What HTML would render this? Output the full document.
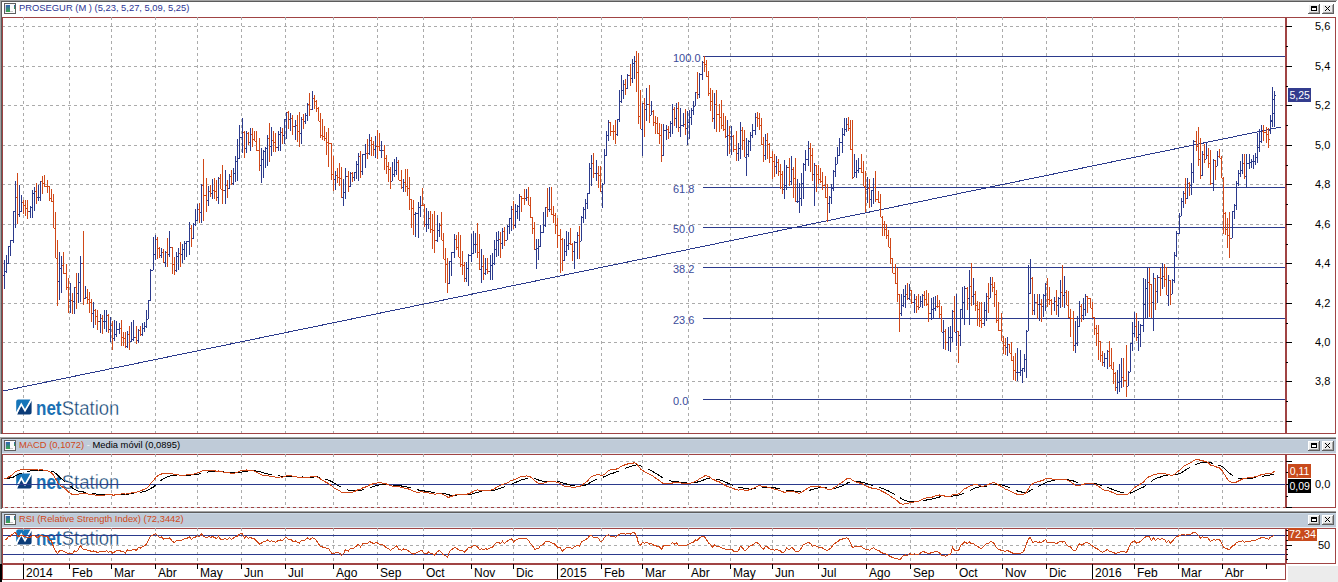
<!DOCTYPE html>
<html><head><meta charset="utf-8"><style>
html,body{margin:0;padding:0;background:#fff;}
body{width:1338px;height:582px;position:relative;overflow:hidden;font-family:"Liberation Sans",sans-serif;}
svg{position:absolute;left:0;top:0;}
.t{position:absolute;white-space:nowrap;line-height:1.2;}
.lg{position:absolute;white-space:nowrap;font-size:19px;line-height:1;color:#0d3f72;letter-spacing:-0.3px}
.lg b{color:#1a70b4;}
</style></head><body>
<svg shape-rendering="crispEdges" width="1338" height="582" viewBox="0 0 1338 582">
<rect x="0" y="0" width="1338" height="582" fill="#ffffff" /><rect x="1288" y="566" width="50" height="16" fill="#ececec" /><rect x="0" y="0" width="1" height="434" fill="#a4a4a4" /><rect x="1" y="1" width="1" height="433" fill="#5c5c5c" /><rect x="0" y="437" width="1" height="72" fill="#a4a4a4" /><rect x="1" y="438" width="1" height="71" fill="#5c5c5c" /><rect x="0" y="511" width="1" height="53" fill="#a4a4a4" /><rect x="1" y="512" width="1" height="52" fill="#5c5c5c" /><rect x="0" y="564" width="2" height="18" fill="#000000" /><rect x="0" y="0" width="1337" height="1" fill="#a4a4a4" /><rect x="1" y="1" width="1335" height="1" fill="#5c5c5c" /><rect x="0" y="437" width="1336" height="1" fill="#a4a4a4" /><rect x="1" y="438" width="1335" height="1" fill="#5c5c5c" /><rect x="2" y="439" width="1334" height="14" fill="#bfcbd8" /><rect x="2" y="439" width="1334" height="1" fill="#c9d7e5" /><rect x="2" y="453" width="1334" height="1" fill="#eaf0f5" /><rect x="0" y="511" width="1336" height="1" fill="#a4a4a4" /><rect x="1" y="512" width="1335" height="1" fill="#5c5c5c" /><rect x="2" y="513" width="1334" height="14" fill="#bfcbd8" /><rect x="2" y="513" width="1334" height="1" fill="#c9d7e5" /><rect x="2" y="527" width="1334" height="1" fill="#eaf0f5" /><line x1="23.5" y1="17" x2="23.5" y2="433" stroke="#ababab" stroke-width="1" stroke-dasharray="3 3"/><line x1="69.5" y1="17" x2="69.5" y2="433" stroke="#ababab" stroke-width="1" stroke-dasharray="3 3"/><line x1="111.5" y1="17" x2="111.5" y2="433" stroke="#ababab" stroke-width="1" stroke-dasharray="3 3"/><line x1="155.5" y1="17" x2="155.5" y2="433" stroke="#ababab" stroke-width="1" stroke-dasharray="3 3"/><line x1="197.5" y1="17" x2="197.5" y2="433" stroke="#ababab" stroke-width="1" stroke-dasharray="3 3"/><line x1="241.5" y1="17" x2="241.5" y2="433" stroke="#ababab" stroke-width="1" stroke-dasharray="3 3"/><line x1="285.5" y1="17" x2="285.5" y2="433" stroke="#ababab" stroke-width="1" stroke-dasharray="3 3"/><line x1="333.5" y1="17" x2="333.5" y2="433" stroke="#ababab" stroke-width="1" stroke-dasharray="3 3"/><line x1="377.5" y1="17" x2="377.5" y2="433" stroke="#ababab" stroke-width="1" stroke-dasharray="3 3"/><line x1="423.5" y1="17" x2="423.5" y2="433" stroke="#ababab" stroke-width="1" stroke-dasharray="3 3"/><line x1="471.5" y1="17" x2="471.5" y2="433" stroke="#ababab" stroke-width="1" stroke-dasharray="3 3"/><line x1="513.5" y1="17" x2="513.5" y2="433" stroke="#ababab" stroke-width="1" stroke-dasharray="3 3"/><line x1="557.5" y1="17" x2="557.5" y2="433" stroke="#ababab" stroke-width="1" stroke-dasharray="3 3"/><line x1="601.5" y1="17" x2="601.5" y2="433" stroke="#ababab" stroke-width="1" stroke-dasharray="3 3"/><line x1="642.5" y1="17" x2="642.5" y2="433" stroke="#ababab" stroke-width="1" stroke-dasharray="3 3"/><line x1="688.5" y1="17" x2="688.5" y2="433" stroke="#ababab" stroke-width="1" stroke-dasharray="3 3"/><line x1="730.5" y1="17" x2="730.5" y2="433" stroke="#ababab" stroke-width="1" stroke-dasharray="3 3"/><line x1="772.5" y1="17" x2="772.5" y2="433" stroke="#ababab" stroke-width="1" stroke-dasharray="3 3"/><line x1="818.5" y1="17" x2="818.5" y2="433" stroke="#ababab" stroke-width="1" stroke-dasharray="3 3"/><line x1="866.5" y1="17" x2="866.5" y2="433" stroke="#ababab" stroke-width="1" stroke-dasharray="3 3"/><line x1="910.5" y1="17" x2="910.5" y2="433" stroke="#ababab" stroke-width="1" stroke-dasharray="3 3"/><line x1="956.5" y1="17" x2="956.5" y2="433" stroke="#ababab" stroke-width="1" stroke-dasharray="3 3"/><line x1="1002.5" y1="17" x2="1002.5" y2="433" stroke="#ababab" stroke-width="1" stroke-dasharray="3 3"/><line x1="1046.5" y1="17" x2="1046.5" y2="433" stroke="#ababab" stroke-width="1" stroke-dasharray="3 3"/><line x1="1092.5" y1="17" x2="1092.5" y2="433" stroke="#ababab" stroke-width="1" stroke-dasharray="3 3"/><line x1="1134.5" y1="17" x2="1134.5" y2="433" stroke="#ababab" stroke-width="1" stroke-dasharray="3 3"/><line x1="1178.5" y1="17" x2="1178.5" y2="433" stroke="#ababab" stroke-width="1" stroke-dasharray="3 3"/><line x1="1222.5" y1="17" x2="1222.5" y2="433" stroke="#ababab" stroke-width="1" stroke-dasharray="3 3"/><line x1="2" y1="26.5" x2="1285" y2="26.5" stroke="#ababab" stroke-width="1" stroke-dasharray="3 3"/><line x1="2" y1="66.5" x2="1285" y2="66.5" stroke="#ababab" stroke-width="1" stroke-dasharray="3 3"/><line x1="2" y1="105.5" x2="1285" y2="105.5" stroke="#ababab" stroke-width="1" stroke-dasharray="3 3"/><line x1="2" y1="145.5" x2="1285" y2="145.5" stroke="#ababab" stroke-width="1" stroke-dasharray="3 3"/><line x1="2" y1="184.5" x2="1285" y2="184.5" stroke="#ababab" stroke-width="1" stroke-dasharray="3 3"/><line x1="2" y1="224.5" x2="1285" y2="224.5" stroke="#ababab" stroke-width="1" stroke-dasharray="3 3"/><line x1="2" y1="263.5" x2="1285" y2="263.5" stroke="#ababab" stroke-width="1" stroke-dasharray="3 3"/><line x1="2" y1="303.5" x2="1285" y2="303.5" stroke="#ababab" stroke-width="1" stroke-dasharray="3 3"/><line x1="2" y1="342.5" x2="1285" y2="342.5" stroke="#ababab" stroke-width="1" stroke-dasharray="3 3"/><line x1="2" y1="381.5" x2="1285" y2="381.5" stroke="#ababab" stroke-width="1" stroke-dasharray="3 3"/><line x1="2" y1="421.5" x2="1285" y2="421.5" stroke="#ababab" stroke-width="1" stroke-dasharray="3 3"/><line x1="23.5" y1="454" x2="23.5" y2="507" stroke="#ababab" stroke-width="1" stroke-dasharray="3 3"/><line x1="69.5" y1="454" x2="69.5" y2="507" stroke="#ababab" stroke-width="1" stroke-dasharray="3 3"/><line x1="111.5" y1="454" x2="111.5" y2="507" stroke="#ababab" stroke-width="1" stroke-dasharray="3 3"/><line x1="155.5" y1="454" x2="155.5" y2="507" stroke="#ababab" stroke-width="1" stroke-dasharray="3 3"/><line x1="197.5" y1="454" x2="197.5" y2="507" stroke="#ababab" stroke-width="1" stroke-dasharray="3 3"/><line x1="241.5" y1="454" x2="241.5" y2="507" stroke="#ababab" stroke-width="1" stroke-dasharray="3 3"/><line x1="285.5" y1="454" x2="285.5" y2="507" stroke="#ababab" stroke-width="1" stroke-dasharray="3 3"/><line x1="333.5" y1="454" x2="333.5" y2="507" stroke="#ababab" stroke-width="1" stroke-dasharray="3 3"/><line x1="377.5" y1="454" x2="377.5" y2="507" stroke="#ababab" stroke-width="1" stroke-dasharray="3 3"/><line x1="423.5" y1="454" x2="423.5" y2="507" stroke="#ababab" stroke-width="1" stroke-dasharray="3 3"/><line x1="471.5" y1="454" x2="471.5" y2="507" stroke="#ababab" stroke-width="1" stroke-dasharray="3 3"/><line x1="513.5" y1="454" x2="513.5" y2="507" stroke="#ababab" stroke-width="1" stroke-dasharray="3 3"/><line x1="557.5" y1="454" x2="557.5" y2="507" stroke="#ababab" stroke-width="1" stroke-dasharray="3 3"/><line x1="601.5" y1="454" x2="601.5" y2="507" stroke="#ababab" stroke-width="1" stroke-dasharray="3 3"/><line x1="642.5" y1="454" x2="642.5" y2="507" stroke="#ababab" stroke-width="1" stroke-dasharray="3 3"/><line x1="688.5" y1="454" x2="688.5" y2="507" stroke="#ababab" stroke-width="1" stroke-dasharray="3 3"/><line x1="730.5" y1="454" x2="730.5" y2="507" stroke="#ababab" stroke-width="1" stroke-dasharray="3 3"/><line x1="772.5" y1="454" x2="772.5" y2="507" stroke="#ababab" stroke-width="1" stroke-dasharray="3 3"/><line x1="818.5" y1="454" x2="818.5" y2="507" stroke="#ababab" stroke-width="1" stroke-dasharray="3 3"/><line x1="866.5" y1="454" x2="866.5" y2="507" stroke="#ababab" stroke-width="1" stroke-dasharray="3 3"/><line x1="910.5" y1="454" x2="910.5" y2="507" stroke="#ababab" stroke-width="1" stroke-dasharray="3 3"/><line x1="956.5" y1="454" x2="956.5" y2="507" stroke="#ababab" stroke-width="1" stroke-dasharray="3 3"/><line x1="1002.5" y1="454" x2="1002.5" y2="507" stroke="#ababab" stroke-width="1" stroke-dasharray="3 3"/><line x1="1046.5" y1="454" x2="1046.5" y2="507" stroke="#ababab" stroke-width="1" stroke-dasharray="3 3"/><line x1="1092.5" y1="454" x2="1092.5" y2="507" stroke="#ababab" stroke-width="1" stroke-dasharray="3 3"/><line x1="1134.5" y1="454" x2="1134.5" y2="507" stroke="#ababab" stroke-width="1" stroke-dasharray="3 3"/><line x1="1178.5" y1="454" x2="1178.5" y2="507" stroke="#ababab" stroke-width="1" stroke-dasharray="3 3"/><line x1="1222.5" y1="454" x2="1222.5" y2="507" stroke="#ababab" stroke-width="1" stroke-dasharray="3 3"/><line x1="2" y1="461.5" x2="1285" y2="461.5" stroke="#ababab" stroke-width="1" stroke-dasharray="3 3"/><line x1="23.5" y1="528" x2="23.5" y2="563" stroke="#ababab" stroke-width="1" stroke-dasharray="3 3"/><line x1="69.5" y1="528" x2="69.5" y2="563" stroke="#ababab" stroke-width="1" stroke-dasharray="3 3"/><line x1="111.5" y1="528" x2="111.5" y2="563" stroke="#ababab" stroke-width="1" stroke-dasharray="3 3"/><line x1="155.5" y1="528" x2="155.5" y2="563" stroke="#ababab" stroke-width="1" stroke-dasharray="3 3"/><line x1="197.5" y1="528" x2="197.5" y2="563" stroke="#ababab" stroke-width="1" stroke-dasharray="3 3"/><line x1="241.5" y1="528" x2="241.5" y2="563" stroke="#ababab" stroke-width="1" stroke-dasharray="3 3"/><line x1="285.5" y1="528" x2="285.5" y2="563" stroke="#ababab" stroke-width="1" stroke-dasharray="3 3"/><line x1="333.5" y1="528" x2="333.5" y2="563" stroke="#ababab" stroke-width="1" stroke-dasharray="3 3"/><line x1="377.5" y1="528" x2="377.5" y2="563" stroke="#ababab" stroke-width="1" stroke-dasharray="3 3"/><line x1="423.5" y1="528" x2="423.5" y2="563" stroke="#ababab" stroke-width="1" stroke-dasharray="3 3"/><line x1="471.5" y1="528" x2="471.5" y2="563" stroke="#ababab" stroke-width="1" stroke-dasharray="3 3"/><line x1="513.5" y1="528" x2="513.5" y2="563" stroke="#ababab" stroke-width="1" stroke-dasharray="3 3"/><line x1="557.5" y1="528" x2="557.5" y2="563" stroke="#ababab" stroke-width="1" stroke-dasharray="3 3"/><line x1="601.5" y1="528" x2="601.5" y2="563" stroke="#ababab" stroke-width="1" stroke-dasharray="3 3"/><line x1="642.5" y1="528" x2="642.5" y2="563" stroke="#ababab" stroke-width="1" stroke-dasharray="3 3"/><line x1="688.5" y1="528" x2="688.5" y2="563" stroke="#ababab" stroke-width="1" stroke-dasharray="3 3"/><line x1="730.5" y1="528" x2="730.5" y2="563" stroke="#ababab" stroke-width="1" stroke-dasharray="3 3"/><line x1="772.5" y1="528" x2="772.5" y2="563" stroke="#ababab" stroke-width="1" stroke-dasharray="3 3"/><line x1="818.5" y1="528" x2="818.5" y2="563" stroke="#ababab" stroke-width="1" stroke-dasharray="3 3"/><line x1="866.5" y1="528" x2="866.5" y2="563" stroke="#ababab" stroke-width="1" stroke-dasharray="3 3"/><line x1="910.5" y1="528" x2="910.5" y2="563" stroke="#ababab" stroke-width="1" stroke-dasharray="3 3"/><line x1="956.5" y1="528" x2="956.5" y2="563" stroke="#ababab" stroke-width="1" stroke-dasharray="3 3"/><line x1="1002.5" y1="528" x2="1002.5" y2="563" stroke="#ababab" stroke-width="1" stroke-dasharray="3 3"/><line x1="1046.5" y1="528" x2="1046.5" y2="563" stroke="#ababab" stroke-width="1" stroke-dasharray="3 3"/><line x1="1092.5" y1="528" x2="1092.5" y2="563" stroke="#ababab" stroke-width="1" stroke-dasharray="3 3"/><line x1="1134.5" y1="528" x2="1134.5" y2="563" stroke="#ababab" stroke-width="1" stroke-dasharray="3 3"/><line x1="1178.5" y1="528" x2="1178.5" y2="563" stroke="#ababab" stroke-width="1" stroke-dasharray="3 3"/><line x1="1222.5" y1="528" x2="1222.5" y2="563" stroke="#ababab" stroke-width="1" stroke-dasharray="3 3"/><line x1="2" y1="545.5" x2="1285" y2="545.5" stroke="#ababab" stroke-width="1" stroke-dasharray="3 3"/><g opacity="1.0" shape-rendering="geometricPrecision"><path d="M16.20,401.60 Q16.20,399.60 18.20,399.60 H30.60 L25.00,410.40 L21.30,404.10 L16.20,412.80 Z" fill="#1675b9"/><path d="M31.60,400.60 V412.50 Q31.60,414.50 29.60,414.50 H17.20 L21.30,404.10 L25.00,410.40 Z" fill="#0b3c78"/><path d="M15.50,415.00 L21.30,404.30 L25.00,410.60 L31.80,399.00" fill="none" stroke="#ffffff" stroke-width="1.7" stroke-linejoin="miter"/><text x="36" y="414.6" font-family="Liberation Sans" font-size="19.5" font-weight="bold" textLength="25.5" lengthAdjust="spacingAndGlyphs" fill="#1a70b4">net</text><text x="61.8" y="414.6" font-family="Liberation Sans" font-size="19.5" textLength="57.5" lengthAdjust="spacingAndGlyphs" fill="#0d3f72" stroke="#ffffff" stroke-width="0.35">Station</text></g><g opacity="1.0" shape-rendering="geometricPrecision"><path d="M16.20,475.60 Q16.20,473.60 18.20,473.60 H30.60 L25.00,484.40 L21.30,478.10 L16.20,486.80 Z" fill="#1675b9"/><path d="M31.60,474.60 V486.50 Q31.60,488.50 29.60,488.50 H17.20 L21.30,478.10 L25.00,484.40 Z" fill="#0b3c78"/><path d="M15.50,489.00 L21.30,478.30 L25.00,484.60 L31.80,473.00" fill="none" stroke="#ffffff" stroke-width="1.7" stroke-linejoin="miter"/><text x="36" y="488.6" font-family="Liberation Sans" font-size="19.5" font-weight="bold" textLength="25.5" lengthAdjust="spacingAndGlyphs" fill="#1a70b4">net</text><text x="61.8" y="488.6" font-family="Liberation Sans" font-size="19.5" textLength="57.5" lengthAdjust="spacingAndGlyphs" fill="#0d3f72" stroke="#ffffff" stroke-width="0.35">Station</text></g><g opacity="1.0" shape-rendering="geometricPrecision"><path d="M16.20,531.60 Q16.20,529.60 18.20,529.60 H30.60 L25.00,540.40 L21.30,534.10 L16.20,542.80 Z" fill="#1675b9"/><path d="M31.60,530.60 V542.50 Q31.60,544.50 29.60,544.50 H17.20 L21.30,534.10 L25.00,540.40 Z" fill="#0b3c78"/><path d="M15.50,545.00 L21.30,534.30 L25.00,540.60 L31.80,529.00" fill="none" stroke="#ffffff" stroke-width="1.7" stroke-linejoin="miter"/><text x="36" y="544.6" font-family="Liberation Sans" font-size="19.5" font-weight="bold" textLength="25.5" lengthAdjust="spacingAndGlyphs" fill="#1a70b4">net</text><text x="61.8" y="544.6" font-family="Liberation Sans" font-size="19.5" textLength="57.5" lengthAdjust="spacingAndGlyphs" fill="#0d3f72" stroke="#ffffff" stroke-width="0.35">Station</text></g><line x1="3" y1="391" x2="1281" y2="127" stroke="#2b3a8c" stroke-width="1"/><line x1="703" y1="56.5" x2="1285" y2="56.5" stroke="#2b3a8c" stroke-width="1"/><line x1="703" y1="187.5" x2="1285" y2="187.5" stroke="#2b3a8c" stroke-width="1"/><line x1="703" y1="227.5" x2="1285" y2="227.5" stroke="#2b3a8c" stroke-width="1"/><line x1="703" y1="267.5" x2="1285" y2="267.5" stroke="#2b3a8c" stroke-width="1"/><line x1="703" y1="318.5" x2="1285" y2="318.5" stroke="#2b3a8c" stroke-width="1"/><line x1="703" y1="399.5" x2="1285" y2="399.5" stroke="#2b3a8c" stroke-width="1"/><path d="M4.5,260V289M3,275.5h1M5,271.5h1" stroke="#2b3a8c" stroke-width="1" fill="none"/><path d="M6.5,255V273M5,271.5h1M7,263.5h1" stroke="#2b3a8c" stroke-width="1" fill="none"/><path d="M8.5,246V264M7,263.5h1M9,246.5h1" stroke="#2b3a8c" stroke-width="1" fill="none"/><path d="M10.5,240V256M9,246.5h1M11,240.5h1" stroke="#2b3a8c" stroke-width="1" fill="none"/><path d="M13.5,211V243M12,240.5h1M14,211.5h1" stroke="#2b3a8c" stroke-width="1" fill="none"/><path d="M15.5,181V228M14,211.5h1M16,197.5h1" stroke="#2b3a8c" stroke-width="1" fill="none"/><path d="M17.5,173V224M16,197.5h1M18,214.5h1" stroke="#d04818" stroke-width="1" fill="none"/><path d="M19.5,185V217M18,214.5h1M20,211.5h1" stroke="#2b3a8c" stroke-width="1" fill="none"/><path d="M21.5,195V212M20,211.5h1M22,202.5h1" stroke="#2b3a8c" stroke-width="1" fill="none"/><path d="M23.5,200V214M22,202.5h1M24,205.5h1" stroke="#d04818" stroke-width="1" fill="none"/><path d="M25.5,200V216M24,205.5h1M26,208.5h1" stroke="#d04818" stroke-width="1" fill="none"/><path d="M27.5,200V219M26,208.5h1M28,211.5h1" stroke="#d04818" stroke-width="1" fill="none"/><path d="M30.5,206V218M29,211.5h1M31,207.5h1" stroke="#2b3a8c" stroke-width="1" fill="none"/><path d="M32.5,190V218M31,207.5h1M33,193.5h1" stroke="#2b3a8c" stroke-width="1" fill="none"/><path d="M34.5,187V211M33,193.5h1M35,191.5h1" stroke="#2b3a8c" stroke-width="1" fill="none"/><path d="M36.5,183V204M35,191.5h1M37,197.5h1" stroke="#d04818" stroke-width="1" fill="none"/><path d="M38.5,185V201M37,197.5h1M39,197.5h1" stroke="#2b3a8c" stroke-width="1" fill="none"/><path d="M40.5,181V201M39,197.5h1M41,181.5h1" stroke="#2b3a8c" stroke-width="1" fill="none"/><path d="M42.5,176V194M41,181.5h1M43,183.5h1" stroke="#d04818" stroke-width="1" fill="none"/><path d="M44.5,175V187M43,183.5h1M45,186.5h1" stroke="#d04818" stroke-width="1" fill="none"/><path d="M47.5,180V193M46,186.5h1M48,186.5h1" stroke="#d04818" stroke-width="1" fill="none"/><path d="M49.5,186V201M48,186.5h1M50,198.5h1" stroke="#d04818" stroke-width="1" fill="none"/><path d="M51.5,189V202M50,198.5h1M52,201.5h1" stroke="#d04818" stroke-width="1" fill="none"/><path d="M53.5,194V228M52,201.5h1M54,228.5h1" stroke="#d04818" stroke-width="1" fill="none"/><path d="M55.5,212V258M54,228.5h1M56,258.5h1" stroke="#d04818" stroke-width="1" fill="none"/><path d="M57.5,240V306M56,258.5h1M58,281.5h1" stroke="#d04818" stroke-width="1" fill="none"/><path d="M59.5,252V300M58,281.5h1M60,268.5h1" stroke="#2b3a8c" stroke-width="1" fill="none"/><path d="M61.5,256V293M60,268.5h1M62,265.5h1" stroke="#2b3a8c" stroke-width="1" fill="none"/><path d="M63.5,252V274M62,265.5h1M64,273.5h1" stroke="#d04818" stroke-width="1" fill="none"/><path d="M66.5,264V290M65,273.5h1M67,287.5h1" stroke="#d04818" stroke-width="1" fill="none"/><path d="M68.5,278V313M67,287.5h1M69,301.5h1" stroke="#d04818" stroke-width="1" fill="none"/><path d="M70.5,283V313M69,301.5h1M71,300.5h1" stroke="#2b3a8c" stroke-width="1" fill="none"/><path d="M72.5,293V314M71,300.5h1M73,301.5h1" stroke="#d04818" stroke-width="1" fill="none"/><path d="M74.5,287V314M73,301.5h1M75,287.5h1" stroke="#2b3a8c" stroke-width="1" fill="none"/><path d="M76.5,273V309M75,287.5h1M77,293.5h1" stroke="#d04818" stroke-width="1" fill="none"/><path d="M78.5,273V303M77,293.5h1M79,282.5h1" stroke="#2b3a8c" stroke-width="1" fill="none"/><path d="M80.5,256V302M79,282.5h1M81,263.5h1" stroke="#2b3a8c" stroke-width="1" fill="none"/><path d="M83.5,231V305M82,263.5h1M84,298.5h1" stroke="#d04818" stroke-width="1" fill="none"/><path d="M85.5,286V299M84,298.5h1M86,297.5h1" stroke="#2b3a8c" stroke-width="1" fill="none"/><path d="M87.5,289V304M86,297.5h1M88,299.5h1" stroke="#d04818" stroke-width="1" fill="none"/><path d="M89.5,292V313M88,299.5h1M90,302.5h1" stroke="#d04818" stroke-width="1" fill="none"/><path d="M91.5,299V322M90,302.5h1M92,313.5h1" stroke="#d04818" stroke-width="1" fill="none"/><path d="M93.5,302V328M92,313.5h1M94,310.5h1" stroke="#2b3a8c" stroke-width="1" fill="none"/><path d="M95.5,309V325M94,310.5h1M96,316.5h1" stroke="#d04818" stroke-width="1" fill="none"/><path d="M97.5,310V330M96,316.5h1M98,321.5h1" stroke="#d04818" stroke-width="1" fill="none"/><path d="M100.5,314V333M99,321.5h1M101,318.5h1" stroke="#2b3a8c" stroke-width="1" fill="none"/><path d="M102.5,315V334M101,318.5h1M103,321.5h1" stroke="#d04818" stroke-width="1" fill="none"/><path d="M104.5,310V329M103,321.5h1M105,321.5h1" stroke="#2b3a8c" stroke-width="1" fill="none"/><path d="M106.5,310V332M105,321.5h1M107,315.5h1" stroke="#2b3a8c" stroke-width="1" fill="none"/><path d="M108.5,314V333M107,315.5h1M109,329.5h1" stroke="#d04818" stroke-width="1" fill="none"/><path d="M110.5,317V342M109,329.5h1M111,325.5h1" stroke="#2b3a8c" stroke-width="1" fill="none"/><path d="M112.5,321V350M111,325.5h1M113,338.5h1" stroke="#d04818" stroke-width="1" fill="none"/><path d="M114.5,320V341M113,338.5h1M115,334.5h1" stroke="#2b3a8c" stroke-width="1" fill="none"/><path d="M116.5,321V337M115,334.5h1M117,329.5h1" stroke="#2b3a8c" stroke-width="1" fill="none"/><path d="M119.5,323V334M118,329.5h1M120,328.5h1" stroke="#2b3a8c" stroke-width="1" fill="none"/><path d="M121.5,320V346M120,328.5h1M122,337.5h1" stroke="#d04818" stroke-width="1" fill="none"/><path d="M123.5,332V346M122,337.5h1M124,338.5h1" stroke="#d04818" stroke-width="1" fill="none"/><path d="M125.5,332V348M124,338.5h1M126,346.5h1" stroke="#d04818" stroke-width="1" fill="none"/><path d="M127.5,331V348M126,346.5h1M128,334.5h1" stroke="#2b3a8c" stroke-width="1" fill="none"/><path d="M129.5,326V350M128,334.5h1M130,341.5h1" stroke="#d04818" stroke-width="1" fill="none"/><path d="M131.5,322V342M130,341.5h1M132,339.5h1" stroke="#2b3a8c" stroke-width="1" fill="none"/><path d="M133.5,320V341M132,339.5h1M134,337.5h1" stroke="#2b3a8c" stroke-width="1" fill="none"/><path d="M136.5,326V344M135,337.5h1M137,340.5h1" stroke="#d04818" stroke-width="1" fill="none"/><path d="M138.5,329V343M137,340.5h1M139,330.5h1" stroke="#2b3a8c" stroke-width="1" fill="none"/><path d="M140.5,326V336M139,330.5h1M141,334.5h1" stroke="#d04818" stroke-width="1" fill="none"/><path d="M142.5,323V336M141,334.5h1M143,328.5h1" stroke="#2b3a8c" stroke-width="1" fill="none"/><path d="M144.5,322V332M143,328.5h1M145,326.5h1" stroke="#2b3a8c" stroke-width="1" fill="none"/><path d="M146.5,310V328M145,326.5h1M147,319.5h1" stroke="#2b3a8c" stroke-width="1" fill="none"/><path d="M148.5,300V319M147,319.5h1M149,300.5h1" stroke="#2b3a8c" stroke-width="1" fill="none"/><path d="M150.5,269V301M149,300.5h1M151,270.5h1" stroke="#2b3a8c" stroke-width="1" fill="none"/><path d="M153.5,237V270M152,270.5h1M154,254.5h1" stroke="#2b3a8c" stroke-width="1" fill="none"/><path d="M155.5,235V260M154,254.5h1M156,239.5h1" stroke="#2b3a8c" stroke-width="1" fill="none"/><path d="M157.5,237V259M156,239.5h1M158,248.5h1" stroke="#d04818" stroke-width="1" fill="none"/><path d="M159.5,247V258M158,248.5h1M160,255.5h1" stroke="#d04818" stroke-width="1" fill="none"/><path d="M161.5,248V258M160,255.5h1M162,252.5h1" stroke="#2b3a8c" stroke-width="1" fill="none"/><path d="M163.5,249V263M162,252.5h1M164,262.5h1" stroke="#d04818" stroke-width="1" fill="none"/><path d="M165.5,251V267M164,262.5h1M166,252.5h1" stroke="#2b3a8c" stroke-width="1" fill="none"/><path d="M167.5,238V267M166,252.5h1M168,254.5h1" stroke="#d04818" stroke-width="1" fill="none"/><path d="M169.5,231V257M168,254.5h1M170,247.5h1" stroke="#2b3a8c" stroke-width="1" fill="none"/><path d="M172.5,247V274M171,247.5h1M173,264.5h1" stroke="#d04818" stroke-width="1" fill="none"/><path d="M174.5,257V275M173,264.5h1M175,270.5h1" stroke="#d04818" stroke-width="1" fill="none"/><path d="M176.5,252V272M175,270.5h1M177,256.5h1" stroke="#2b3a8c" stroke-width="1" fill="none"/><path d="M178.5,248V270M177,256.5h1M179,253.5h1" stroke="#2b3a8c" stroke-width="1" fill="none"/><path d="M180.5,242V267M179,253.5h1M181,254.5h1" stroke="#d04818" stroke-width="1" fill="none"/><path d="M182.5,244V263M181,254.5h1M183,249.5h1" stroke="#2b3a8c" stroke-width="1" fill="none"/><path d="M184.5,241V260M183,249.5h1M185,243.5h1" stroke="#2b3a8c" stroke-width="1" fill="none"/><path d="M186.5,241V257M185,243.5h1M187,241.5h1" stroke="#2b3a8c" stroke-width="1" fill="none"/><path d="M189.5,222V255M188,241.5h1M190,228.5h1" stroke="#2b3a8c" stroke-width="1" fill="none"/><path d="M191.5,225V247M190,228.5h1M192,238.5h1" stroke="#d04818" stroke-width="1" fill="none"/><path d="M193.5,223V239M192,238.5h1M194,224.5h1" stroke="#2b3a8c" stroke-width="1" fill="none"/><path d="M195.5,209V226M194,224.5h1M196,220.5h1" stroke="#2b3a8c" stroke-width="1" fill="none"/><path d="M197.5,204V221M196,220.5h1M198,209.5h1" stroke="#2b3a8c" stroke-width="1" fill="none"/><path d="M199.5,203V223M198,209.5h1M200,212.5h1" stroke="#d04818" stroke-width="1" fill="none"/><path d="M201.5,184V223M200,212.5h1M202,185.5h1" stroke="#2b3a8c" stroke-width="1" fill="none"/><path d="M203.5,159V221M202,185.5h1M204,195.5h1" stroke="#d04818" stroke-width="1" fill="none"/><path d="M206.5,178V212M205,195.5h1M207,200.5h1" stroke="#d04818" stroke-width="1" fill="none"/><path d="M208.5,186V206M207,200.5h1M209,191.5h1" stroke="#2b3a8c" stroke-width="1" fill="none"/><path d="M210.5,185V197M209,191.5h1M211,193.5h1" stroke="#d04818" stroke-width="1" fill="none"/><path d="M212.5,179V199M211,193.5h1M213,190.5h1" stroke="#2b3a8c" stroke-width="1" fill="none"/><path d="M214.5,178V199M213,190.5h1M215,191.5h1" stroke="#d04818" stroke-width="1" fill="none"/><path d="M216.5,180V201M215,191.5h1M217,197.5h1" stroke="#d04818" stroke-width="1" fill="none"/><path d="M218.5,177V204M217,197.5h1M219,178.5h1" stroke="#2b3a8c" stroke-width="1" fill="none"/><path d="M220.5,174V189M219,178.5h1M221,189.5h1" stroke="#d04818" stroke-width="1" fill="none"/><path d="M222.5,165V204M221,189.5h1M223,190.5h1" stroke="#d04818" stroke-width="1" fill="none"/><path d="M225.5,170V204M224,190.5h1M226,185.5h1" stroke="#2b3a8c" stroke-width="1" fill="none"/><path d="M227.5,180V198M226,185.5h1M228,188.5h1" stroke="#d04818" stroke-width="1" fill="none"/><path d="M229.5,174V189M228,188.5h1M230,176.5h1" stroke="#2b3a8c" stroke-width="1" fill="none"/><path d="M231.5,170V185M230,176.5h1M232,183.5h1" stroke="#d04818" stroke-width="1" fill="none"/><path d="M233.5,168V185M232,183.5h1M234,173.5h1" stroke="#2b3a8c" stroke-width="1" fill="none"/><path d="M235.5,156V182M234,173.5h1M236,161.5h1" stroke="#2b3a8c" stroke-width="1" fill="none"/><path d="M237.5,139V181M236,161.5h1M238,158.5h1" stroke="#2b3a8c" stroke-width="1" fill="none"/><path d="M239.5,125V159M238,158.5h1M240,137.5h1" stroke="#2b3a8c" stroke-width="1" fill="none"/><path d="M242.5,118V153M241,137.5h1M243,132.5h1" stroke="#2b3a8c" stroke-width="1" fill="none"/><path d="M244.5,131V158M243,132.5h1M245,148.5h1" stroke="#d04818" stroke-width="1" fill="none"/><path d="M246.5,131V153M245,148.5h1M247,133.5h1" stroke="#2b3a8c" stroke-width="1" fill="none"/><path d="M248.5,132V145M247,133.5h1M249,142.5h1" stroke="#d04818" stroke-width="1" fill="none"/><path d="M250.5,128V151M249,142.5h1M251,134.5h1" stroke="#2b3a8c" stroke-width="1" fill="none"/><path d="M252.5,128V147M251,134.5h1M253,139.5h1" stroke="#d04818" stroke-width="1" fill="none"/><path d="M254.5,131V141M253,139.5h1M255,141.5h1" stroke="#d04818" stroke-width="1" fill="none"/><path d="M256.5,131V151M255,141.5h1M257,150.5h1" stroke="#d04818" stroke-width="1" fill="none"/><path d="M259.5,138V171M258,150.5h1M260,165.5h1" stroke="#d04818" stroke-width="1" fill="none"/><path d="M261.5,148V183M260,165.5h1M262,159.5h1" stroke="#2b3a8c" stroke-width="1" fill="none"/><path d="M263.5,150V178M262,159.5h1M264,151.5h1" stroke="#2b3a8c" stroke-width="1" fill="none"/><path d="M265.5,147V168M264,151.5h1M266,148.5h1" stroke="#2b3a8c" stroke-width="1" fill="none"/><path d="M267.5,135V166M266,148.5h1M268,138.5h1" stroke="#2b3a8c" stroke-width="1" fill="none"/><path d="M269.5,123V162M268,138.5h1M270,146.5h1" stroke="#d04818" stroke-width="1" fill="none"/><path d="M271.5,127V156M270,146.5h1M272,140.5h1" stroke="#2b3a8c" stroke-width="1" fill="none"/><path d="M273.5,131V152M272,140.5h1M274,142.5h1" stroke="#d04818" stroke-width="1" fill="none"/><path d="M275.5,133V152M274,142.5h1M276,147.5h1" stroke="#d04818" stroke-width="1" fill="none"/><path d="M278.5,131V151M277,147.5h1M279,134.5h1" stroke="#2b3a8c" stroke-width="1" fill="none"/><path d="M280.5,127V151M279,134.5h1M281,132.5h1" stroke="#2b3a8c" stroke-width="1" fill="none"/><path d="M282.5,128V144M281,132.5h1M283,135.5h1" stroke="#d04818" stroke-width="1" fill="none"/><path d="M284.5,119V144M283,135.5h1M285,119.5h1" stroke="#2b3a8c" stroke-width="1" fill="none"/><path d="M286.5,112V139M285,119.5h1M287,112.5h1" stroke="#2b3a8c" stroke-width="1" fill="none"/><path d="M288.5,111V129M287,112.5h1M289,119.5h1" stroke="#d04818" stroke-width="1" fill="none"/><path d="M290.5,113V131M289,119.5h1M291,118.5h1" stroke="#2b3a8c" stroke-width="1" fill="none"/><path d="M292.5,115V135M291,118.5h1M293,126.5h1" stroke="#d04818" stroke-width="1" fill="none"/><path d="M295.5,120V140M294,126.5h1M296,125.5h1" stroke="#2b3a8c" stroke-width="1" fill="none"/><path d="M297.5,115V142M296,125.5h1M298,131.5h1" stroke="#d04818" stroke-width="1" fill="none"/><path d="M299.5,112V147M298,131.5h1M300,133.5h1" stroke="#d04818" stroke-width="1" fill="none"/><path d="M301.5,117V144M300,133.5h1M302,119.5h1" stroke="#2b3a8c" stroke-width="1" fill="none"/><path d="M303.5,114V129M302,119.5h1M304,121.5h1" stroke="#d04818" stroke-width="1" fill="none"/><path d="M305.5,113V124M304,121.5h1M306,115.5h1" stroke="#2b3a8c" stroke-width="1" fill="none"/><path d="M307.5,103V121M306,115.5h1M308,104.5h1" stroke="#2b3a8c" stroke-width="1" fill="none"/><path d="M309.5,93V116M308,104.5h1M310,109.5h1" stroke="#d04818" stroke-width="1" fill="none"/><path d="M312.5,91V110M311,109.5h1M313,98.5h1" stroke="#2b3a8c" stroke-width="1" fill="none"/><path d="M314.5,95V109M313,98.5h1M315,101.5h1" stroke="#d04818" stroke-width="1" fill="none"/><path d="M316.5,100V112M315,101.5h1M317,108.5h1" stroke="#d04818" stroke-width="1" fill="none"/><path d="M318.5,107V121M317,108.5h1M319,121.5h1" stroke="#d04818" stroke-width="1" fill="none"/><path d="M320.5,113V138M319,121.5h1M321,135.5h1" stroke="#d04818" stroke-width="1" fill="none"/><path d="M322.5,119V140M321,135.5h1M323,136.5h1" stroke="#d04818" stroke-width="1" fill="none"/><path d="M324.5,126V141M323,136.5h1M325,138.5h1" stroke="#d04818" stroke-width="1" fill="none"/><path d="M326.5,132V155M325,138.5h1M327,142.5h1" stroke="#d04818" stroke-width="1" fill="none"/><path d="M328.5,128V167M327,142.5h1M329,143.5h1" stroke="#d04818" stroke-width="1" fill="none"/><path d="M331.5,143V180M330,143.5h1M332,174.5h1" stroke="#d04818" stroke-width="1" fill="none"/><path d="M333.5,156V191M332,174.5h1M334,179.5h1" stroke="#d04818" stroke-width="1" fill="none"/><path d="M335.5,171V190M334,179.5h1M336,175.5h1" stroke="#2b3a8c" stroke-width="1" fill="none"/><path d="M337.5,168V183M336,175.5h1M338,177.5h1" stroke="#d04818" stroke-width="1" fill="none"/><path d="M339.5,163V186M338,177.5h1M340,178.5h1" stroke="#d04818" stroke-width="1" fill="none"/><path d="M341.5,167V198M340,178.5h1M342,197.5h1" stroke="#d04818" stroke-width="1" fill="none"/><path d="M343.5,179V206M342,197.5h1M344,192.5h1" stroke="#2b3a8c" stroke-width="1" fill="none"/><path d="M345.5,168V199M344,192.5h1M346,176.5h1" stroke="#2b3a8c" stroke-width="1" fill="none"/><path d="M348.5,171V192M347,176.5h1M349,186.5h1" stroke="#d04818" stroke-width="1" fill="none"/><path d="M350.5,172V187M349,186.5h1M351,173.5h1" stroke="#2b3a8c" stroke-width="1" fill="none"/><path d="M352.5,172V182M351,173.5h1M353,177.5h1" stroke="#d04818" stroke-width="1" fill="none"/><path d="M354.5,172V181M353,177.5h1M355,172.5h1" stroke="#2b3a8c" stroke-width="1" fill="none"/><path d="M356.5,161V179M355,172.5h1M357,164.5h1" stroke="#2b3a8c" stroke-width="1" fill="none"/><path d="M358.5,153V181M357,164.5h1M359,156.5h1" stroke="#2b3a8c" stroke-width="1" fill="none"/><path d="M360.5,151V178M359,156.5h1M361,171.5h1" stroke="#d04818" stroke-width="1" fill="none"/><path d="M362.5,154V175M361,171.5h1M363,154.5h1" stroke="#2b3a8c" stroke-width="1" fill="none"/><path d="M365.5,144V168M364,154.5h1M366,153.5h1" stroke="#2b3a8c" stroke-width="1" fill="none"/><path d="M367.5,139V159M366,153.5h1M368,153.5h1" stroke="#d04818" stroke-width="1" fill="none"/><path d="M369.5,134V155M368,153.5h1M370,140.5h1" stroke="#2b3a8c" stroke-width="1" fill="none"/><path d="M371.5,137V156M370,140.5h1M372,144.5h1" stroke="#d04818" stroke-width="1" fill="none"/><path d="M373.5,141V156M372,144.5h1M374,149.5h1" stroke="#d04818" stroke-width="1" fill="none"/><path d="M375.5,136V158M374,149.5h1M376,146.5h1" stroke="#2b3a8c" stroke-width="1" fill="none"/><path d="M377.5,130V159M376,146.5h1M378,146.5h1" stroke="#d04818" stroke-width="1" fill="none"/><path d="M379.5,133V151M378,146.5h1M380,150.5h1" stroke="#d04818" stroke-width="1" fill="none"/><path d="M381.5,141V158M380,150.5h1M382,150.5h1" stroke="#2b3a8c" stroke-width="1" fill="none"/><path d="M384.5,145V170M383,150.5h1M385,158.5h1" stroke="#d04818" stroke-width="1" fill="none"/><path d="M386.5,155V174M385,158.5h1M387,166.5h1" stroke="#d04818" stroke-width="1" fill="none"/><path d="M388.5,162V182M387,166.5h1M389,169.5h1" stroke="#d04818" stroke-width="1" fill="none"/><path d="M390.5,167V189M389,169.5h1M391,181.5h1" stroke="#d04818" stroke-width="1" fill="none"/><path d="M392.5,162V181M391,181.5h1M393,174.5h1" stroke="#2b3a8c" stroke-width="1" fill="none"/><path d="M394.5,159V177M393,174.5h1M395,170.5h1" stroke="#2b3a8c" stroke-width="1" fill="none"/><path d="M396.5,157V175M395,170.5h1M397,162.5h1" stroke="#2b3a8c" stroke-width="1" fill="none"/><path d="M398.5,160V180M397,162.5h1M399,180.5h1" stroke="#d04818" stroke-width="1" fill="none"/><path d="M401.5,170V189M400,180.5h1M402,187.5h1" stroke="#d04818" stroke-width="1" fill="none"/><path d="M403.5,179V192M402,187.5h1M404,182.5h1" stroke="#2b3a8c" stroke-width="1" fill="none"/><path d="M405.5,169V192M404,182.5h1M406,186.5h1" stroke="#d04818" stroke-width="1" fill="none"/><path d="M407.5,169V196M406,186.5h1M408,188.5h1" stroke="#d04818" stroke-width="1" fill="none"/><path d="M409.5,177V210M408,188.5h1M410,199.5h1" stroke="#d04818" stroke-width="1" fill="none"/><path d="M411.5,199V228M410,199.5h1M412,208.5h1" stroke="#d04818" stroke-width="1" fill="none"/><path d="M413.5,200V235M412,208.5h1M414,214.5h1" stroke="#d04818" stroke-width="1" fill="none"/><path d="M415.5,212V237M414,214.5h1M416,213.5h1" stroke="#2b3a8c" stroke-width="1" fill="none"/><path d="M418.5,202V238M417,213.5h1M419,207.5h1" stroke="#2b3a8c" stroke-width="1" fill="none"/><path d="M420.5,196V217M419,207.5h1M421,205.5h1" stroke="#2b3a8c" stroke-width="1" fill="none"/><path d="M422.5,188V206M421,205.5h1M423,205.5h1" stroke="#d04818" stroke-width="1" fill="none"/><path d="M424.5,204V227M423,205.5h1M425,224.5h1" stroke="#d04818" stroke-width="1" fill="none"/><path d="M426.5,208V232M425,224.5h1M427,224.5h1" stroke="#2b3a8c" stroke-width="1" fill="none"/><path d="M428.5,211V229M427,224.5h1M429,218.5h1" stroke="#2b3a8c" stroke-width="1" fill="none"/><path d="M430.5,211V233M429,218.5h1M431,229.5h1" stroke="#d04818" stroke-width="1" fill="none"/><path d="M432.5,214V249M431,229.5h1M433,230.5h1" stroke="#d04818" stroke-width="1" fill="none"/><path d="M434.5,211V253M433,230.5h1M435,240.5h1" stroke="#d04818" stroke-width="1" fill="none"/><path d="M437.5,215V242M436,240.5h1M438,230.5h1" stroke="#2b3a8c" stroke-width="1" fill="none"/><path d="M439.5,223V237M438,230.5h1M440,225.5h1" stroke="#2b3a8c" stroke-width="1" fill="none"/><path d="M441.5,212V240M440,225.5h1M442,240.5h1" stroke="#d04818" stroke-width="1" fill="none"/><path d="M443.5,233V259M442,240.5h1M444,259.5h1" stroke="#d04818" stroke-width="1" fill="none"/><path d="M445.5,248V283M444,259.5h1M446,264.5h1" stroke="#d04818" stroke-width="1" fill="none"/><path d="M447.5,258V293M446,264.5h1M448,283.5h1" stroke="#d04818" stroke-width="1" fill="none"/><path d="M449.5,261V284M448,283.5h1M450,261.5h1" stroke="#2b3a8c" stroke-width="1" fill="none"/><path d="M451.5,252V276M450,261.5h1M452,252.5h1" stroke="#2b3a8c" stroke-width="1" fill="none"/><path d="M454.5,234V258M453,252.5h1M455,239.5h1" stroke="#2b3a8c" stroke-width="1" fill="none"/><path d="M456.5,235V250M455,239.5h1M457,247.5h1" stroke="#d04818" stroke-width="1" fill="none"/><path d="M458.5,232V257M457,247.5h1M459,257.5h1" stroke="#d04818" stroke-width="1" fill="none"/><path d="M460.5,235V267M459,257.5h1M461,264.5h1" stroke="#d04818" stroke-width="1" fill="none"/><path d="M462.5,251V275M461,264.5h1M463,265.5h1" stroke="#d04818" stroke-width="1" fill="none"/><path d="M464.5,262V282M463,265.5h1M465,278.5h1" stroke="#d04818" stroke-width="1" fill="none"/><path d="M466.5,262V282M465,278.5h1M467,268.5h1" stroke="#2b3a8c" stroke-width="1" fill="none"/><path d="M468.5,254V286M467,268.5h1M469,255.5h1" stroke="#2b3a8c" stroke-width="1" fill="none"/><path d="M471.5,234V262M470,255.5h1M472,253.5h1" stroke="#2b3a8c" stroke-width="1" fill="none"/><path d="M473.5,231V254M472,253.5h1M474,244.5h1" stroke="#2b3a8c" stroke-width="1" fill="none"/><path d="M475.5,233V253M474,244.5h1M476,244.5h1" stroke="#2b3a8c" stroke-width="1" fill="none"/><path d="M477.5,223V258M476,244.5h1M478,252.5h1" stroke="#d04818" stroke-width="1" fill="none"/><path d="M479.5,234V270M478,252.5h1M480,269.5h1" stroke="#d04818" stroke-width="1" fill="none"/><path d="M481.5,249V283M480,269.5h1M482,266.5h1" stroke="#2b3a8c" stroke-width="1" fill="none"/><path d="M483.5,255V280M482,266.5h1M484,273.5h1" stroke="#d04818" stroke-width="1" fill="none"/><path d="M485.5,258V275M484,273.5h1M486,269.5h1" stroke="#2b3a8c" stroke-width="1" fill="none"/><path d="M487.5,258V274M486,269.5h1M488,271.5h1" stroke="#d04818" stroke-width="1" fill="none"/><path d="M490.5,255V280M489,271.5h1M491,265.5h1" stroke="#2b3a8c" stroke-width="1" fill="none"/><path d="M492.5,253V280M491,265.5h1M493,263.5h1" stroke="#2b3a8c" stroke-width="1" fill="none"/><path d="M494.5,240V265M493,263.5h1M495,249.5h1" stroke="#2b3a8c" stroke-width="1" fill="none"/><path d="M496.5,232V257M495,249.5h1M497,240.5h1" stroke="#2b3a8c" stroke-width="1" fill="none"/><path d="M498.5,231V256M497,240.5h1M499,239.5h1" stroke="#2b3a8c" stroke-width="1" fill="none"/><path d="M500.5,232V258M499,239.5h1M501,243.5h1" stroke="#d04818" stroke-width="1" fill="none"/><path d="M502.5,228V249M501,243.5h1M503,231.5h1" stroke="#2b3a8c" stroke-width="1" fill="none"/><path d="M504.5,227V246M503,231.5h1M505,240.5h1" stroke="#d04818" stroke-width="1" fill="none"/><path d="M507.5,225V240M506,240.5h1M508,226.5h1" stroke="#2b3a8c" stroke-width="1" fill="none"/><path d="M509.5,218V234M508,226.5h1M510,218.5h1" stroke="#2b3a8c" stroke-width="1" fill="none"/><path d="M511.5,206V231M510,218.5h1M512,209.5h1" stroke="#2b3a8c" stroke-width="1" fill="none"/><path d="M513.5,201V229M512,209.5h1M514,225.5h1" stroke="#d04818" stroke-width="1" fill="none"/><path d="M515.5,204V228M514,225.5h1M516,211.5h1" stroke="#2b3a8c" stroke-width="1" fill="none"/><path d="M517.5,205V219M516,211.5h1M518,206.5h1" stroke="#2b3a8c" stroke-width="1" fill="none"/><path d="M519.5,194V221M518,206.5h1M520,196.5h1" stroke="#2b3a8c" stroke-width="1" fill="none"/><path d="M521.5,196V212M520,196.5h1M522,198.5h1" stroke="#d04818" stroke-width="1" fill="none"/><path d="M524.5,189V205M523,198.5h1M525,198.5h1" stroke="#d04818" stroke-width="1" fill="none"/><path d="M526.5,189V201M525,198.5h1M527,197.5h1" stroke="#2b3a8c" stroke-width="1" fill="none"/><path d="M528.5,187V205M527,197.5h1M529,205.5h1" stroke="#d04818" stroke-width="1" fill="none"/><path d="M530.5,197V218M529,205.5h1M531,217.5h1" stroke="#d04818" stroke-width="1" fill="none"/><path d="M532.5,217V234M531,217.5h1M533,228.5h1" stroke="#d04818" stroke-width="1" fill="none"/><path d="M534.5,222V250M533,228.5h1M535,249.5h1" stroke="#d04818" stroke-width="1" fill="none"/><path d="M536.5,239V269M535,249.5h1M537,248.5h1" stroke="#2b3a8c" stroke-width="1" fill="none"/><path d="M538.5,239V260M537,248.5h1M539,246.5h1" stroke="#2b3a8c" stroke-width="1" fill="none"/><path d="M540.5,225V247M539,246.5h1M541,232.5h1" stroke="#2b3a8c" stroke-width="1" fill="none"/><path d="M543.5,212V233M542,232.5h1M544,225.5h1" stroke="#2b3a8c" stroke-width="1" fill="none"/><path d="M545.5,207V227M544,225.5h1M546,207.5h1" stroke="#2b3a8c" stroke-width="1" fill="none"/><path d="M547.5,188V217M546,207.5h1M548,209.5h1" stroke="#d04818" stroke-width="1" fill="none"/><path d="M549.5,187V212M548,209.5h1M550,209.5h1" stroke="#2b3a8c" stroke-width="1" fill="none"/><path d="M551.5,187V215M550,209.5h1M552,214.5h1" stroke="#d04818" stroke-width="1" fill="none"/><path d="M553.5,206V223M552,214.5h1M554,215.5h1" stroke="#d04818" stroke-width="1" fill="none"/><path d="M555.5,213V234M554,215.5h1M556,225.5h1" stroke="#d04818" stroke-width="1" fill="none"/><path d="M557.5,218V248M556,225.5h1M558,235.5h1" stroke="#d04818" stroke-width="1" fill="none"/><path d="M560.5,229V273M559,235.5h1M561,239.5h1" stroke="#d04818" stroke-width="1" fill="none"/><path d="M562.5,238V271M561,239.5h1M563,260.5h1" stroke="#d04818" stroke-width="1" fill="none"/><path d="M564.5,239V261M563,260.5h1M565,251.5h1" stroke="#2b3a8c" stroke-width="1" fill="none"/><path d="M566.5,231V256M565,251.5h1M567,245.5h1" stroke="#2b3a8c" stroke-width="1" fill="none"/><path d="M568.5,232V250M567,245.5h1M569,243.5h1" stroke="#2b3a8c" stroke-width="1" fill="none"/><path d="M570.5,228V245M569,243.5h1M571,244.5h1" stroke="#d04818" stroke-width="1" fill="none"/><path d="M572.5,243V261M571,244.5h1M573,251.5h1" stroke="#d04818" stroke-width="1" fill="none"/><path d="M574.5,241V269M573,251.5h1M575,242.5h1" stroke="#2b3a8c" stroke-width="1" fill="none"/><path d="M577.5,232V259M576,242.5h1M578,235.5h1" stroke="#2b3a8c" stroke-width="1" fill="none"/><path d="M579.5,226V259M578,235.5h1M580,241.5h1" stroke="#d04818" stroke-width="1" fill="none"/><path d="M581.5,216V241M580,241.5h1M582,217.5h1" stroke="#2b3a8c" stroke-width="1" fill="none"/><path d="M583.5,207V223M582,217.5h1M584,209.5h1" stroke="#2b3a8c" stroke-width="1" fill="none"/><path d="M585.5,199V219M584,209.5h1M586,203.5h1" stroke="#2b3a8c" stroke-width="1" fill="none"/><path d="M587.5,193V209M586,203.5h1M588,193.5h1" stroke="#2b3a8c" stroke-width="1" fill="none"/><path d="M589.5,163V194M588,193.5h1M590,168.5h1" stroke="#2b3a8c" stroke-width="1" fill="none"/><path d="M591.5,155V186M590,168.5h1M592,163.5h1" stroke="#2b3a8c" stroke-width="1" fill="none"/><path d="M593.5,153V178M592,163.5h1M594,173.5h1" stroke="#d04818" stroke-width="1" fill="none"/><path d="M596.5,160V181M595,173.5h1M597,173.5h1" stroke="#2b3a8c" stroke-width="1" fill="none"/><path d="M598.5,166V188M597,173.5h1M599,175.5h1" stroke="#d04818" stroke-width="1" fill="none"/><path d="M600.5,166V192M599,175.5h1M601,191.5h1" stroke="#d04818" stroke-width="1" fill="none"/><path d="M602.5,183V208M601,191.5h1M603,184.5h1" stroke="#2b3a8c" stroke-width="1" fill="none"/><path d="M604.5,149V184M603,184.5h1M605,155.5h1" stroke="#2b3a8c" stroke-width="1" fill="none"/><path d="M606.5,131V156M605,155.5h1M607,135.5h1" stroke="#2b3a8c" stroke-width="1" fill="none"/><path d="M608.5,120V141M607,135.5h1M609,122.5h1" stroke="#2b3a8c" stroke-width="1" fill="none"/><path d="M610.5,122V136M609,122.5h1M611,131.5h1" stroke="#d04818" stroke-width="1" fill="none"/><path d="M613.5,125V140M612,131.5h1M614,131.5h1" stroke="#d04818" stroke-width="1" fill="none"/><path d="M615.5,120V144M614,131.5h1M616,134.5h1" stroke="#d04818" stroke-width="1" fill="none"/><path d="M617.5,119V136M616,134.5h1M618,119.5h1" stroke="#2b3a8c" stroke-width="1" fill="none"/><path d="M619.5,90V122M618,119.5h1M620,101.5h1" stroke="#2b3a8c" stroke-width="1" fill="none"/><path d="M621.5,75V103M620,101.5h1M622,90.5h1" stroke="#2b3a8c" stroke-width="1" fill="none"/><path d="M623.5,80V99M622,90.5h1M624,84.5h1" stroke="#2b3a8c" stroke-width="1" fill="none"/><path d="M625.5,79V95M624,84.5h1M626,88.5h1" stroke="#d04818" stroke-width="1" fill="none"/><path d="M627.5,74V89M626,88.5h1M628,75.5h1" stroke="#2b3a8c" stroke-width="1" fill="none"/><path d="M630.5,64V86M629,75.5h1M631,78.5h1" stroke="#d04818" stroke-width="1" fill="none"/><path d="M632.5,59V83M631,78.5h1M633,63.5h1" stroke="#2b3a8c" stroke-width="1" fill="none"/><path d="M634.5,56V79M633,63.5h1M635,61.5h1" stroke="#2b3a8c" stroke-width="1" fill="none"/><path d="M636.5,51V92M635,61.5h1M637,72.5h1" stroke="#d04818" stroke-width="1" fill="none"/><path d="M638.5,53V124M637,72.5h1M639,116.5h1" stroke="#d04818" stroke-width="1" fill="none"/><path d="M640.5,90V129M639,116.5h1M641,129.5h1" stroke="#d04818" stroke-width="1" fill="none"/><path d="M642.5,103V156M641,129.5h1M643,103.5h1" stroke="#2b3a8c" stroke-width="1" fill="none"/><path d="M644.5,98V137M643,103.5h1M645,109.5h1" stroke="#d04818" stroke-width="1" fill="none"/><path d="M646.5,88V121M645,109.5h1M647,104.5h1" stroke="#2b3a8c" stroke-width="1" fill="none"/><path d="M649.5,85V123M648,104.5h1M650,115.5h1" stroke="#d04818" stroke-width="1" fill="none"/><path d="M651.5,101V115M650,115.5h1M652,111.5h1" stroke="#2b3a8c" stroke-width="1" fill="none"/><path d="M653.5,110V126M652,111.5h1M654,122.5h1" stroke="#d04818" stroke-width="1" fill="none"/><path d="M655.5,116V134M654,122.5h1M656,123.5h1" stroke="#d04818" stroke-width="1" fill="none"/><path d="M657.5,117V134M656,123.5h1M658,133.5h1" stroke="#d04818" stroke-width="1" fill="none"/><path d="M659.5,123V144M658,133.5h1M660,135.5h1" stroke="#d04818" stroke-width="1" fill="none"/><path d="M661.5,124V162M660,135.5h1M662,155.5h1" stroke="#d04818" stroke-width="1" fill="none"/><path d="M663.5,124V156M662,155.5h1M664,130.5h1" stroke="#2b3a8c" stroke-width="1" fill="none"/><path d="M666.5,125V140M665,130.5h1M667,129.5h1" stroke="#2b3a8c" stroke-width="1" fill="none"/><path d="M668.5,126V139M667,129.5h1M669,132.5h1" stroke="#d04818" stroke-width="1" fill="none"/><path d="M670.5,121V137M669,132.5h1M671,123.5h1" stroke="#2b3a8c" stroke-width="1" fill="none"/><path d="M672.5,104V134M671,123.5h1M673,109.5h1" stroke="#2b3a8c" stroke-width="1" fill="none"/><path d="M674.5,107V126M673,109.5h1M675,118.5h1" stroke="#d04818" stroke-width="1" fill="none"/><path d="M676.5,103V128M675,118.5h1M677,108.5h1" stroke="#2b3a8c" stroke-width="1" fill="none"/><path d="M678.5,102V132M677,108.5h1M679,127.5h1" stroke="#d04818" stroke-width="1" fill="none"/><path d="M680.5,108V137M679,127.5h1M681,125.5h1" stroke="#2b3a8c" stroke-width="1" fill="none"/><path d="M683.5,113V127M682,125.5h1M684,124.5h1" stroke="#2b3a8c" stroke-width="1" fill="none"/><path d="M685.5,109V135M684,124.5h1M686,128.5h1" stroke="#d04818" stroke-width="1" fill="none"/><path d="M687.5,111V145M686,128.5h1M688,122.5h1" stroke="#2b3a8c" stroke-width="1" fill="none"/><path d="M689.5,110V139M688,122.5h1M690,117.5h1" stroke="#2b3a8c" stroke-width="1" fill="none"/><path d="M691.5,108V125M690,117.5h1M692,110.5h1" stroke="#2b3a8c" stroke-width="1" fill="none"/><path d="M693.5,101V115M692,110.5h1M694,106.5h1" stroke="#2b3a8c" stroke-width="1" fill="none"/><path d="M695.5,92V106M694,106.5h1M696,92.5h1" stroke="#2b3a8c" stroke-width="1" fill="none"/><path d="M697.5,72V99M696,92.5h1M698,94.5h1" stroke="#d04818" stroke-width="1" fill="none"/><path d="M699.5,73V98M698,94.5h1M700,74.5h1" stroke="#2b3a8c" stroke-width="1" fill="none"/><path d="M702.5,61V80M701,74.5h1M703,62.5h1" stroke="#2b3a8c" stroke-width="1" fill="none"/><path d="M704.5,56V72M703,62.5h1M705,64.5h1" stroke="#d04818" stroke-width="1" fill="none"/><path d="M706.5,60V77M705,64.5h1M707,76.5h1" stroke="#d04818" stroke-width="1" fill="none"/><path d="M708.5,71V96M707,76.5h1M709,93.5h1" stroke="#d04818" stroke-width="1" fill="none"/><path d="M710.5,88V111M709,93.5h1M711,101.5h1" stroke="#d04818" stroke-width="1" fill="none"/><path d="M712.5,90V122M711,101.5h1M713,118.5h1" stroke="#d04818" stroke-width="1" fill="none"/><path d="M714.5,93V129M713,118.5h1M715,104.5h1" stroke="#2b3a8c" stroke-width="1" fill="none"/><path d="M716.5,90V132M715,104.5h1M717,114.5h1" stroke="#d04818" stroke-width="1" fill="none"/><path d="M719.5,104V132M718,114.5h1M720,117.5h1" stroke="#d04818" stroke-width="1" fill="none"/><path d="M721.5,100V129M720,117.5h1M722,125.5h1" stroke="#d04818" stroke-width="1" fill="none"/><path d="M723.5,113V131M722,125.5h1M724,129.5h1" stroke="#d04818" stroke-width="1" fill="none"/><path d="M725.5,116V138M724,129.5h1M726,136.5h1" stroke="#d04818" stroke-width="1" fill="none"/><path d="M727.5,120V156M726,136.5h1M728,135.5h1" stroke="#2b3a8c" stroke-width="1" fill="none"/><path d="M729.5,126V154M728,135.5h1M730,136.5h1" stroke="#d04818" stroke-width="1" fill="none"/><path d="M731.5,126V155M730,136.5h1M732,136.5h1" stroke="#2b3a8c" stroke-width="1" fill="none"/><path d="M733.5,135V152M732,136.5h1M734,149.5h1" stroke="#d04818" stroke-width="1" fill="none"/><path d="M736.5,131V161M735,149.5h1M737,153.5h1" stroke="#d04818" stroke-width="1" fill="none"/><path d="M738.5,143V161M737,153.5h1M739,148.5h1" stroke="#2b3a8c" stroke-width="1" fill="none"/><path d="M740.5,122V159M739,148.5h1M741,130.5h1" stroke="#2b3a8c" stroke-width="1" fill="none"/><path d="M742.5,127V150M741,130.5h1M743,140.5h1" stroke="#d04818" stroke-width="1" fill="none"/><path d="M744.5,130V157M743,140.5h1M745,157.5h1" stroke="#d04818" stroke-width="1" fill="none"/><path d="M746.5,138V176M745,157.5h1M747,154.5h1" stroke="#2b3a8c" stroke-width="1" fill="none"/><path d="M748.5,140V157M747,154.5h1M749,141.5h1" stroke="#2b3a8c" stroke-width="1" fill="none"/><path d="M750.5,132V151M749,141.5h1M751,135.5h1" stroke="#2b3a8c" stroke-width="1" fill="none"/><path d="M752.5,124V138M751,135.5h1M753,130.5h1" stroke="#2b3a8c" stroke-width="1" fill="none"/><path d="M755.5,113V135M754,130.5h1M756,117.5h1" stroke="#2b3a8c" stroke-width="1" fill="none"/><path d="M757.5,112V127M756,117.5h1M758,118.5h1" stroke="#d04818" stroke-width="1" fill="none"/><path d="M759.5,113V130M758,118.5h1M760,125.5h1" stroke="#d04818" stroke-width="1" fill="none"/><path d="M761.5,118V145M760,125.5h1M762,144.5h1" stroke="#d04818" stroke-width="1" fill="none"/><path d="M763.5,137V162M762,144.5h1M764,155.5h1" stroke="#d04818" stroke-width="1" fill="none"/><path d="M765.5,134V160M764,155.5h1M766,140.5h1" stroke="#2b3a8c" stroke-width="1" fill="none"/><path d="M767.5,133V159M766,140.5h1M768,144.5h1" stroke="#d04818" stroke-width="1" fill="none"/><path d="M769.5,143V163M768,144.5h1M770,157.5h1" stroke="#d04818" stroke-width="1" fill="none"/><path d="M772.5,151V179M771,157.5h1M773,161.5h1" stroke="#d04818" stroke-width="1" fill="none"/><path d="M774.5,154V177M773,161.5h1M775,166.5h1" stroke="#d04818" stroke-width="1" fill="none"/><path d="M776.5,156V174M775,166.5h1M777,162.5h1" stroke="#2b3a8c" stroke-width="1" fill="none"/><path d="M778.5,159V176M777,162.5h1M779,171.5h1" stroke="#d04818" stroke-width="1" fill="none"/><path d="M780.5,164V189M779,171.5h1M781,174.5h1" stroke="#d04818" stroke-width="1" fill="none"/><path d="M782.5,171V194M781,174.5h1M783,189.5h1" stroke="#d04818" stroke-width="1" fill="none"/><path d="M784.5,160V199M783,189.5h1M785,185.5h1" stroke="#2b3a8c" stroke-width="1" fill="none"/><path d="M786.5,165V190M785,185.5h1M787,167.5h1" stroke="#2b3a8c" stroke-width="1" fill="none"/><path d="M789.5,158V186M788,167.5h1M790,181.5h1" stroke="#d04818" stroke-width="1" fill="none"/><path d="M791.5,156V185M790,181.5h1M792,169.5h1" stroke="#2b3a8c" stroke-width="1" fill="none"/><path d="M793.5,167V198M792,169.5h1M794,178.5h1" stroke="#d04818" stroke-width="1" fill="none"/><path d="M795.5,158V202M794,178.5h1M796,201.5h1" stroke="#d04818" stroke-width="1" fill="none"/><path d="M797.5,179V203M796,201.5h1M798,201.5h1" stroke="#2b3a8c" stroke-width="1" fill="none"/><path d="M799.5,183V213M798,201.5h1M800,198.5h1" stroke="#2b3a8c" stroke-width="1" fill="none"/><path d="M801.5,173V206M800,198.5h1M802,183.5h1" stroke="#2b3a8c" stroke-width="1" fill="none"/><path d="M803.5,163V199M802,183.5h1M804,164.5h1" stroke="#2b3a8c" stroke-width="1" fill="none"/><path d="M805.5,150V171M804,164.5h1M806,159.5h1" stroke="#2b3a8c" stroke-width="1" fill="none"/><path d="M808.5,141V166M807,159.5h1M809,148.5h1" stroke="#2b3a8c" stroke-width="1" fill="none"/><path d="M810.5,143V172M809,148.5h1M811,155.5h1" stroke="#d04818" stroke-width="1" fill="none"/><path d="M812.5,148V181M811,155.5h1M813,174.5h1" stroke="#d04818" stroke-width="1" fill="none"/><path d="M814.5,163V206M813,174.5h1M815,165.5h1" stroke="#2b3a8c" stroke-width="1" fill="none"/><path d="M816.5,165V192M815,165.5h1M817,174.5h1" stroke="#d04818" stroke-width="1" fill="none"/><path d="M818.5,165V184M817,174.5h1M819,179.5h1" stroke="#d04818" stroke-width="1" fill="none"/><path d="M820.5,168V183M819,179.5h1M821,181.5h1" stroke="#d04818" stroke-width="1" fill="none"/><path d="M822.5,172V190M821,181.5h1M823,185.5h1" stroke="#d04818" stroke-width="1" fill="none"/><path d="M825.5,176V198M824,185.5h1M826,197.5h1" stroke="#d04818" stroke-width="1" fill="none"/><path d="M827.5,184V222M826,197.5h1M828,203.5h1" stroke="#d04818" stroke-width="1" fill="none"/><path d="M829.5,196V213M828,203.5h1M830,197.5h1" stroke="#2b3a8c" stroke-width="1" fill="none"/><path d="M831.5,184V204M830,197.5h1M832,188.5h1" stroke="#2b3a8c" stroke-width="1" fill="none"/><path d="M833.5,170V191M832,188.5h1M834,171.5h1" stroke="#2b3a8c" stroke-width="1" fill="none"/><path d="M835.5,157V177M834,171.5h1M836,164.5h1" stroke="#2b3a8c" stroke-width="1" fill="none"/><path d="M837.5,147V164M836,164.5h1M838,155.5h1" stroke="#2b3a8c" stroke-width="1" fill="none"/><path d="M839.5,138V156M838,155.5h1M840,142.5h1" stroke="#2b3a8c" stroke-width="1" fill="none"/><path d="M842.5,128V153M841,142.5h1M843,134.5h1" stroke="#2b3a8c" stroke-width="1" fill="none"/><path d="M844.5,118V136M843,134.5h1M845,129.5h1" stroke="#2b3a8c" stroke-width="1" fill="none"/><path d="M846.5,118V132M845,129.5h1M847,124.5h1" stroke="#2b3a8c" stroke-width="1" fill="none"/><path d="M848.5,117V131M847,124.5h1M849,128.5h1" stroke="#d04818" stroke-width="1" fill="none"/><path d="M850.5,120V150M849,128.5h1M851,149.5h1" stroke="#d04818" stroke-width="1" fill="none"/><path d="M852.5,120V179M851,149.5h1M853,177.5h1" stroke="#d04818" stroke-width="1" fill="none"/><path d="M854.5,154V177M853,177.5h1M855,172.5h1" stroke="#2b3a8c" stroke-width="1" fill="none"/><path d="M856.5,160V178M855,172.5h1M857,170.5h1" stroke="#2b3a8c" stroke-width="1" fill="none"/><path d="M858.5,158V173M857,170.5h1M859,168.5h1" stroke="#2b3a8c" stroke-width="1" fill="none"/><path d="M861.5,154V173M860,168.5h1M862,172.5h1" stroke="#d04818" stroke-width="1" fill="none"/><path d="M863.5,161V186M862,172.5h1M864,186.5h1" stroke="#d04818" stroke-width="1" fill="none"/><path d="M865.5,171V212M864,186.5h1M866,189.5h1" stroke="#d04818" stroke-width="1" fill="none"/><path d="M867.5,177V203M866,189.5h1M868,188.5h1" stroke="#2b3a8c" stroke-width="1" fill="none"/><path d="M869.5,179V208M868,188.5h1M870,199.5h1" stroke="#d04818" stroke-width="1" fill="none"/><path d="M871.5,190V207M870,199.5h1M872,190.5h1" stroke="#2b3a8c" stroke-width="1" fill="none"/><path d="M873.5,178V204M872,190.5h1M874,187.5h1" stroke="#2b3a8c" stroke-width="1" fill="none"/><path d="M875.5,171V202M874,187.5h1M876,199.5h1" stroke="#d04818" stroke-width="1" fill="none"/><path d="M878.5,191V203M877,199.5h1M879,202.5h1" stroke="#d04818" stroke-width="1" fill="none"/><path d="M880.5,194V217M879,202.5h1M881,217.5h1" stroke="#d04818" stroke-width="1" fill="none"/><path d="M882.5,216V236M881,217.5h1M883,224.5h1" stroke="#d04818" stroke-width="1" fill="none"/><path d="M884.5,221V236M883,224.5h1M885,229.5h1" stroke="#d04818" stroke-width="1" fill="none"/><path d="M886.5,224V239M885,229.5h1M887,235.5h1" stroke="#d04818" stroke-width="1" fill="none"/><path d="M888.5,230V247M887,235.5h1M889,247.5h1" stroke="#d04818" stroke-width="1" fill="none"/><path d="M890.5,238V264M889,247.5h1M891,258.5h1" stroke="#d04818" stroke-width="1" fill="none"/><path d="M892.5,258V273M891,258.5h1M893,273.5h1" stroke="#d04818" stroke-width="1" fill="none"/><path d="M895.5,264V284M894,273.5h1M896,283.5h1" stroke="#d04818" stroke-width="1" fill="none"/><path d="M897.5,268V302M896,283.5h1M898,294.5h1" stroke="#d04818" stroke-width="1" fill="none"/><path d="M899.5,294V332M898,294.5h1M900,313.5h1" stroke="#d04818" stroke-width="1" fill="none"/><path d="M901.5,294V316M900,313.5h1M902,305.5h1" stroke="#2b3a8c" stroke-width="1" fill="none"/><path d="M903.5,289V307M902,305.5h1M904,296.5h1" stroke="#2b3a8c" stroke-width="1" fill="none"/><path d="M905.5,285V308M904,296.5h1M906,294.5h1" stroke="#2b3a8c" stroke-width="1" fill="none"/><path d="M907.5,283V300M906,294.5h1M908,298.5h1" stroke="#d04818" stroke-width="1" fill="none"/><path d="M909.5,284V300M908,298.5h1M910,290.5h1" stroke="#2b3a8c" stroke-width="1" fill="none"/><path d="M911.5,290V304M910,290.5h1M912,302.5h1" stroke="#d04818" stroke-width="1" fill="none"/><path d="M914.5,294V313M913,302.5h1M915,299.5h1" stroke="#2b3a8c" stroke-width="1" fill="none"/><path d="M916.5,296V313M915,299.5h1M917,306.5h1" stroke="#d04818" stroke-width="1" fill="none"/><path d="M918.5,294V310M917,306.5h1M919,307.5h1" stroke="#d04818" stroke-width="1" fill="none"/><path d="M920.5,296V307M919,307.5h1M921,301.5h1" stroke="#2b3a8c" stroke-width="1" fill="none"/><path d="M922.5,294V308M921,301.5h1M923,295.5h1" stroke="#2b3a8c" stroke-width="1" fill="none"/><path d="M924.5,291V306M923,295.5h1M925,299.5h1" stroke="#d04818" stroke-width="1" fill="none"/><path d="M926.5,290V306M925,299.5h1M927,304.5h1" stroke="#d04818" stroke-width="1" fill="none"/><path d="M928.5,293V322M927,304.5h1M929,313.5h1" stroke="#d04818" stroke-width="1" fill="none"/><path d="M931.5,298V320M930,313.5h1M932,309.5h1" stroke="#2b3a8c" stroke-width="1" fill="none"/><path d="M933.5,297V319M932,309.5h1M934,308.5h1" stroke="#2b3a8c" stroke-width="1" fill="none"/><path d="M935.5,296V311M934,308.5h1M936,306.5h1" stroke="#2b3a8c" stroke-width="1" fill="none"/><path d="M937.5,295V308M936,306.5h1M938,306.5h1" stroke="#d04818" stroke-width="1" fill="none"/><path d="M939.5,300V318M938,306.5h1M940,314.5h1" stroke="#d04818" stroke-width="1" fill="none"/><path d="M941.5,306V332M940,314.5h1M942,332.5h1" stroke="#d04818" stroke-width="1" fill="none"/><path d="M943.5,320V349M942,332.5h1M944,331.5h1" stroke="#2b3a8c" stroke-width="1" fill="none"/><path d="M945.5,329V350M944,331.5h1M946,342.5h1" stroke="#d04818" stroke-width="1" fill="none"/><path d="M948.5,327V351M947,342.5h1M949,337.5h1" stroke="#2b3a8c" stroke-width="1" fill="none"/><path d="M950.5,326V352M949,337.5h1M951,337.5h1" stroke="#2b3a8c" stroke-width="1" fill="none"/><path d="M952.5,310V342M951,337.5h1M953,311.5h1" stroke="#2b3a8c" stroke-width="1" fill="none"/><path d="M954.5,296V332M953,311.5h1M955,332.5h1" stroke="#d04818" stroke-width="1" fill="none"/><path d="M956.5,294V346M955,332.5h1M957,331.5h1" stroke="#2b3a8c" stroke-width="1" fill="none"/><path d="M958.5,331V363M957,331.5h1M959,335.5h1" stroke="#d04818" stroke-width="1" fill="none"/><path d="M960.5,309V346M959,335.5h1M961,309.5h1" stroke="#2b3a8c" stroke-width="1" fill="none"/><path d="M962.5,287V319M961,309.5h1M963,302.5h1" stroke="#2b3a8c" stroke-width="1" fill="none"/><path d="M964.5,286V325M963,302.5h1M965,288.5h1" stroke="#2b3a8c" stroke-width="1" fill="none"/><path d="M967.5,287V310M966,288.5h1M968,298.5h1" stroke="#d04818" stroke-width="1" fill="none"/><path d="M969.5,270V325M968,298.5h1M970,286.5h1" stroke="#2b3a8c" stroke-width="1" fill="none"/><path d="M971.5,263V306M970,286.5h1M972,296.5h1" stroke="#d04818" stroke-width="1" fill="none"/><path d="M973.5,278V305M972,296.5h1M974,294.5h1" stroke="#2b3a8c" stroke-width="1" fill="none"/><path d="M975.5,291V311M974,294.5h1M976,305.5h1" stroke="#d04818" stroke-width="1" fill="none"/><path d="M977.5,301V326M976,305.5h1M978,309.5h1" stroke="#d04818" stroke-width="1" fill="none"/><path d="M979.5,302V327M978,309.5h1M980,320.5h1" stroke="#d04818" stroke-width="1" fill="none"/><path d="M981.5,302V328M980,320.5h1M982,323.5h1" stroke="#d04818" stroke-width="1" fill="none"/><path d="M984.5,302V326M983,323.5h1M985,310.5h1" stroke="#2b3a8c" stroke-width="1" fill="none"/><path d="M986.5,293V321M985,310.5h1M987,296.5h1" stroke="#2b3a8c" stroke-width="1" fill="none"/><path d="M988.5,283V313M987,296.5h1M989,298.5h1" stroke="#d04818" stroke-width="1" fill="none"/><path d="M990.5,277V298M989,298.5h1M991,284.5h1" stroke="#2b3a8c" stroke-width="1" fill="none"/><path d="M992.5,277V292M991,284.5h1M993,287.5h1" stroke="#d04818" stroke-width="1" fill="none"/><path d="M994.5,282V307M993,287.5h1M995,294.5h1" stroke="#d04818" stroke-width="1" fill="none"/><path d="M996.5,290V323M995,294.5h1M997,320.5h1" stroke="#d04818" stroke-width="1" fill="none"/><path d="M998.5,302V331M997,320.5h1M999,330.5h1" stroke="#d04818" stroke-width="1" fill="none"/><path d="M1001.5,313V341M1000,330.5h1M1002,341.5h1" stroke="#d04818" stroke-width="1" fill="none"/><path d="M1003.5,336V354M1002,341.5h1M1004,345.5h1" stroke="#d04818" stroke-width="1" fill="none"/><path d="M1005.5,338V355M1004,345.5h1M1006,347.5h1" stroke="#d04818" stroke-width="1" fill="none"/><path d="M1007.5,337V356M1006,347.5h1M1008,344.5h1" stroke="#2b3a8c" stroke-width="1" fill="none"/><path d="M1009.5,344V353M1008,344.5h1M1010,353.5h1" stroke="#d04818" stroke-width="1" fill="none"/><path d="M1011.5,342V361M1010,353.5h1M1012,360.5h1" stroke="#d04818" stroke-width="1" fill="none"/><path d="M1013.5,356V380M1012,360.5h1M1014,370.5h1" stroke="#d04818" stroke-width="1" fill="none"/><path d="M1015.5,353V381M1014,370.5h1M1016,372.5h1" stroke="#d04818" stroke-width="1" fill="none"/><path d="M1017.5,348V381M1016,372.5h1M1018,372.5h1" stroke="#2b3a8c" stroke-width="1" fill="none"/><path d="M1020.5,350V376M1019,372.5h1M1021,370.5h1" stroke="#2b3a8c" stroke-width="1" fill="none"/><path d="M1022.5,368V383M1021,370.5h1M1023,368.5h1" stroke="#2b3a8c" stroke-width="1" fill="none"/><path d="M1024.5,354V372M1023,368.5h1M1025,359.5h1" stroke="#2b3a8c" stroke-width="1" fill="none"/><path d="M1026.5,330V378M1025,359.5h1M1027,331.5h1" stroke="#2b3a8c" stroke-width="1" fill="none"/><path d="M1028.5,265V331M1027,331.5h1M1029,293.5h1" stroke="#2b3a8c" stroke-width="1" fill="none"/><path d="M1030.5,259V294M1029,293.5h1M1031,278.5h1" stroke="#2b3a8c" stroke-width="1" fill="none"/><path d="M1032.5,277V315M1031,278.5h1M1033,310.5h1" stroke="#d04818" stroke-width="1" fill="none"/><path d="M1034.5,294V315M1033,310.5h1M1035,302.5h1" stroke="#2b3a8c" stroke-width="1" fill="none"/><path d="M1037.5,294V319M1036,302.5h1M1038,304.5h1" stroke="#d04818" stroke-width="1" fill="none"/><path d="M1039.5,294V321M1038,304.5h1M1040,304.5h1" stroke="#2b3a8c" stroke-width="1" fill="none"/><path d="M1041.5,299V322M1040,304.5h1M1042,306.5h1" stroke="#d04818" stroke-width="1" fill="none"/><path d="M1043.5,294V317M1042,306.5h1M1044,295.5h1" stroke="#2b3a8c" stroke-width="1" fill="none"/><path d="M1045.5,283V311M1044,295.5h1M1046,284.5h1" stroke="#2b3a8c" stroke-width="1" fill="none"/><path d="M1047.5,278V307M1046,284.5h1M1048,299.5h1" stroke="#d04818" stroke-width="1" fill="none"/><path d="M1049.5,287V305M1048,299.5h1M1050,300.5h1" stroke="#d04818" stroke-width="1" fill="none"/><path d="M1051.5,299V315M1050,300.5h1M1052,303.5h1" stroke="#d04818" stroke-width="1" fill="none"/><path d="M1054.5,297V311M1053,303.5h1M1055,301.5h1" stroke="#2b3a8c" stroke-width="1" fill="none"/><path d="M1056.5,290V315M1055,301.5h1M1057,305.5h1" stroke="#d04818" stroke-width="1" fill="none"/><path d="M1058.5,297V317M1057,305.5h1M1059,298.5h1" stroke="#2b3a8c" stroke-width="1" fill="none"/><path d="M1060.5,280V308M1059,298.5h1M1061,292.5h1" stroke="#2b3a8c" stroke-width="1" fill="none"/><path d="M1062.5,265V307M1061,292.5h1M1063,295.5h1" stroke="#d04818" stroke-width="1" fill="none"/><path d="M1064.5,276V308M1063,295.5h1M1065,292.5h1" stroke="#2b3a8c" stroke-width="1" fill="none"/><path d="M1066.5,290V305M1065,292.5h1M1067,305.5h1" stroke="#d04818" stroke-width="1" fill="none"/><path d="M1068.5,291V318M1067,305.5h1M1069,317.5h1" stroke="#d04818" stroke-width="1" fill="none"/><path d="M1070.5,309V337M1069,317.5h1M1071,318.5h1" stroke="#d04818" stroke-width="1" fill="none"/><path d="M1073.5,311V351M1072,318.5h1M1074,345.5h1" stroke="#d04818" stroke-width="1" fill="none"/><path d="M1075.5,321V353M1074,345.5h1M1076,343.5h1" stroke="#2b3a8c" stroke-width="1" fill="none"/><path d="M1077.5,316V346M1076,343.5h1M1078,326.5h1" stroke="#2b3a8c" stroke-width="1" fill="none"/><path d="M1079.5,301V327M1078,326.5h1M1080,306.5h1" stroke="#2b3a8c" stroke-width="1" fill="none"/><path d="M1081.5,304V322M1080,306.5h1M1082,315.5h1" stroke="#d04818" stroke-width="1" fill="none"/><path d="M1083.5,298V320M1082,315.5h1M1084,309.5h1" stroke="#2b3a8c" stroke-width="1" fill="none"/><path d="M1085.5,294V316M1084,309.5h1M1086,296.5h1" stroke="#2b3a8c" stroke-width="1" fill="none"/><path d="M1087.5,296V313M1086,296.5h1M1088,298.5h1" stroke="#d04818" stroke-width="1" fill="none"/><path d="M1090.5,298V308M1089,298.5h1M1091,308.5h1" stroke="#d04818" stroke-width="1" fill="none"/><path d="M1092.5,302V318M1091,308.5h1M1093,317.5h1" stroke="#d04818" stroke-width="1" fill="none"/><path d="M1094.5,317V335M1093,317.5h1M1095,328.5h1" stroke="#d04818" stroke-width="1" fill="none"/><path d="M1096.5,325V346M1095,328.5h1M1097,333.5h1" stroke="#d04818" stroke-width="1" fill="none"/><path d="M1098.5,325V360M1097,333.5h1M1099,341.5h1" stroke="#d04818" stroke-width="1" fill="none"/><path d="M1100.5,341V362M1099,341.5h1M1101,355.5h1" stroke="#d04818" stroke-width="1" fill="none"/><path d="M1102.5,351V366M1101,355.5h1M1103,362.5h1" stroke="#d04818" stroke-width="1" fill="none"/><path d="M1104.5,353V367M1103,362.5h1M1105,358.5h1" stroke="#2b3a8c" stroke-width="1" fill="none"/><path d="M1107.5,350V369M1106,358.5h1M1108,351.5h1" stroke="#2b3a8c" stroke-width="1" fill="none"/><path d="M1109.5,341V367M1108,351.5h1M1110,365.5h1" stroke="#d04818" stroke-width="1" fill="none"/><path d="M1111.5,348V369M1110,365.5h1M1112,369.5h1" stroke="#d04818" stroke-width="1" fill="none"/><path d="M1113.5,362V384M1112,369.5h1M1114,373.5h1" stroke="#d04818" stroke-width="1" fill="none"/><path d="M1115.5,372V391M1114,373.5h1M1116,387.5h1" stroke="#d04818" stroke-width="1" fill="none"/><path d="M1117.5,370V394M1116,387.5h1M1118,382.5h1" stroke="#2b3a8c" stroke-width="1" fill="none"/><path d="M1119.5,364V392M1118,382.5h1M1120,381.5h1" stroke="#2b3a8c" stroke-width="1" fill="none"/><path d="M1121.5,358V388M1120,381.5h1M1122,377.5h1" stroke="#2b3a8c" stroke-width="1" fill="none"/><path d="M1123.5,358V387M1122,377.5h1M1124,380.5h1" stroke="#d04818" stroke-width="1" fill="none"/><path d="M1126.5,345V397M1125,380.5h1M1127,386.5h1" stroke="#d04818" stroke-width="1" fill="none"/><path d="M1128.5,371V386M1127,386.5h1M1129,372.5h1" stroke="#2b3a8c" stroke-width="1" fill="none"/><path d="M1130.5,343V372M1129,372.5h1M1131,343.5h1" stroke="#2b3a8c" stroke-width="1" fill="none"/><path d="M1132.5,322V351M1131,343.5h1M1133,333.5h1" stroke="#2b3a8c" stroke-width="1" fill="none"/><path d="M1134.5,312V337M1133,333.5h1M1135,326.5h1" stroke="#2b3a8c" stroke-width="1" fill="none"/><path d="M1136.5,313V341M1135,326.5h1M1137,337.5h1" stroke="#d04818" stroke-width="1" fill="none"/><path d="M1138.5,321V351M1137,337.5h1M1139,334.5h1" stroke="#2b3a8c" stroke-width="1" fill="none"/><path d="M1140.5,324V347M1139,334.5h1M1141,325.5h1" stroke="#2b3a8c" stroke-width="1" fill="none"/><path d="M1143.5,278V332M1142,325.5h1M1144,304.5h1" stroke="#2b3a8c" stroke-width="1" fill="none"/><path d="M1145.5,279V319M1144,304.5h1M1146,288.5h1" stroke="#2b3a8c" stroke-width="1" fill="none"/><path d="M1147.5,268V318M1146,288.5h1M1148,282.5h1" stroke="#2b3a8c" stroke-width="1" fill="none"/><path d="M1149.5,268V317M1148,282.5h1M1150,284.5h1" stroke="#d04818" stroke-width="1" fill="none"/><path d="M1151.5,284V318M1150,284.5h1M1152,302.5h1" stroke="#d04818" stroke-width="1" fill="none"/><path d="M1153.5,273V331M1152,302.5h1M1154,278.5h1" stroke="#2b3a8c" stroke-width="1" fill="none"/><path d="M1155.5,278V310M1154,278.5h1M1156,291.5h1" stroke="#d04818" stroke-width="1" fill="none"/><path d="M1157.5,275V303M1156,291.5h1M1158,277.5h1" stroke="#2b3a8c" stroke-width="1" fill="none"/><path d="M1160.5,268V296M1159,277.5h1M1161,278.5h1" stroke="#d04818" stroke-width="1" fill="none"/><path d="M1162.5,263V289M1161,278.5h1M1163,276.5h1" stroke="#2b3a8c" stroke-width="1" fill="none"/><path d="M1164.5,264V287M1163,276.5h1M1165,279.5h1" stroke="#d04818" stroke-width="1" fill="none"/><path d="M1166.5,267V295M1165,279.5h1M1167,295.5h1" stroke="#d04818" stroke-width="1" fill="none"/><path d="M1168.5,275V306M1167,295.5h1M1169,280.5h1" stroke="#2b3a8c" stroke-width="1" fill="none"/><path d="M1170.5,280V305M1169,280.5h1M1171,294.5h1" stroke="#d04818" stroke-width="1" fill="none"/><path d="M1172.5,279V294M1171,294.5h1M1173,280.5h1" stroke="#2b3a8c" stroke-width="1" fill="none"/><path d="M1174.5,252V283M1173,280.5h1M1175,255.5h1" stroke="#2b3a8c" stroke-width="1" fill="none"/><path d="M1176.5,231V257M1175,255.5h1M1177,233.5h1" stroke="#2b3a8c" stroke-width="1" fill="none"/><path d="M1179.5,213V234M1178,233.5h1M1180,216.5h1" stroke="#2b3a8c" stroke-width="1" fill="none"/><path d="M1181.5,198V216M1180,216.5h1M1182,201.5h1" stroke="#2b3a8c" stroke-width="1" fill="none"/><path d="M1183.5,191V208M1182,201.5h1M1184,193.5h1" stroke="#2b3a8c" stroke-width="1" fill="none"/><path d="M1185.5,178V204M1184,193.5h1M1186,198.5h1" stroke="#d04818" stroke-width="1" fill="none"/><path d="M1187.5,178V199M1186,198.5h1M1188,183.5h1" stroke="#2b3a8c" stroke-width="1" fill="none"/><path d="M1189.5,182V196M1188,183.5h1M1190,185.5h1" stroke="#d04818" stroke-width="1" fill="none"/><path d="M1191.5,163V195M1190,185.5h1M1192,172.5h1" stroke="#2b3a8c" stroke-width="1" fill="none"/><path d="M1193.5,140V183M1192,172.5h1M1194,141.5h1" stroke="#2b3a8c" stroke-width="1" fill="none"/><path d="M1196.5,131V151M1195,141.5h1M1197,146.5h1" stroke="#d04818" stroke-width="1" fill="none"/><path d="M1198.5,127V166M1197,146.5h1M1199,159.5h1" stroke="#d04818" stroke-width="1" fill="none"/><path d="M1200.5,138V179M1199,159.5h1M1201,175.5h1" stroke="#d04818" stroke-width="1" fill="none"/><path d="M1202.5,151V176M1201,175.5h1M1203,154.5h1" stroke="#2b3a8c" stroke-width="1" fill="none"/><path d="M1204.5,144V163M1203,154.5h1M1205,159.5h1" stroke="#d04818" stroke-width="1" fill="none"/><path d="M1206.5,142V159M1205,159.5h1M1207,155.5h1" stroke="#2b3a8c" stroke-width="1" fill="none"/><path d="M1208.5,148V168M1207,155.5h1M1209,163.5h1" stroke="#d04818" stroke-width="1" fill="none"/><path d="M1210.5,150V185M1209,163.5h1M1211,183.5h1" stroke="#d04818" stroke-width="1" fill="none"/><path d="M1213.5,159V191M1212,183.5h1M1214,160.5h1" stroke="#2b3a8c" stroke-width="1" fill="none"/><path d="M1215.5,160V180M1214,160.5h1M1216,166.5h1" stroke="#d04818" stroke-width="1" fill="none"/><path d="M1217.5,151V166M1216,166.5h1M1218,156.5h1" stroke="#2b3a8c" stroke-width="1" fill="none"/><path d="M1219.5,149V158M1218,156.5h1M1220,158.5h1" stroke="#d04818" stroke-width="1" fill="none"/><path d="M1221.5,156V178M1220,158.5h1M1222,178.5h1" stroke="#d04818" stroke-width="1" fill="none"/><path d="M1223.5,177V234M1222,178.5h1M1224,213.5h1" stroke="#d04818" stroke-width="1" fill="none"/><path d="M1225.5,212V235M1224,213.5h1M1226,229.5h1" stroke="#d04818" stroke-width="1" fill="none"/><path d="M1227.5,218V248M1226,229.5h1M1228,235.5h1" stroke="#d04818" stroke-width="1" fill="none"/><path d="M1229.5,212V258M1228,235.5h1M1230,238.5h1" stroke="#d04818" stroke-width="1" fill="none"/><path d="M1232.5,211V238M1231,238.5h1M1233,211.5h1" stroke="#2b3a8c" stroke-width="1" fill="none"/><path d="M1234.5,204V219M1233,211.5h1M1235,205.5h1" stroke="#2b3a8c" stroke-width="1" fill="none"/><path d="M1236.5,181V210M1235,205.5h1M1237,183.5h1" stroke="#2b3a8c" stroke-width="1" fill="none"/><path d="M1238.5,170V186M1237,183.5h1M1239,173.5h1" stroke="#2b3a8c" stroke-width="1" fill="none"/><path d="M1240.5,161V177M1239,173.5h1M1241,170.5h1" stroke="#2b3a8c" stroke-width="1" fill="none"/><path d="M1242.5,154V174M1241,170.5h1M1243,163.5h1" stroke="#2b3a8c" stroke-width="1" fill="none"/><path d="M1244.5,154V179M1243,163.5h1M1245,176.5h1" stroke="#d04818" stroke-width="1" fill="none"/><path d="M1246.5,154V188M1245,176.5h1M1247,163.5h1" stroke="#2b3a8c" stroke-width="1" fill="none"/><path d="M1249.5,154V169M1248,163.5h1M1250,162.5h1" stroke="#2b3a8c" stroke-width="1" fill="none"/><path d="M1251.5,159V168M1250,162.5h1M1252,161.5h1" stroke="#2b3a8c" stroke-width="1" fill="none"/><path d="M1253.5,155V169M1252,161.5h1M1254,161.5h1" stroke="#2b3a8c" stroke-width="1" fill="none"/><path d="M1255.5,153V165M1254,161.5h1M1256,157.5h1" stroke="#2b3a8c" stroke-width="1" fill="none"/><path d="M1257.5,133V163M1256,157.5h1M1258,147.5h1" stroke="#2b3a8c" stroke-width="1" fill="none"/><path d="M1259.5,129V152M1258,147.5h1M1260,141.5h1" stroke="#2b3a8c" stroke-width="1" fill="none"/><path d="M1261.5,125V143M1260,141.5h1M1262,131.5h1" stroke="#2b3a8c" stroke-width="1" fill="none"/><path d="M1263.5,125V141M1262,131.5h1M1264,132.5h1" stroke="#d04818" stroke-width="1" fill="none"/><path d="M1266.5,127V143M1265,132.5h1M1267,134.5h1" stroke="#d04818" stroke-width="1" fill="none"/><path d="M1268.5,128V148M1267,134.5h1M1269,139.5h1" stroke="#d04818" stroke-width="1" fill="none"/><path d="M1270.5,115V134M1269,130.5h1M1271,121.5h1" stroke="#2b3a8c" stroke-width="1" fill="none"/><path d="M1272.5,87V127M1271,120.5h1M1273,113.5h1" stroke="#2b3a8c" stroke-width="1" fill="none"/><path d="M1274.5,91V127M1273,99.5h1M1275,95.5h1" stroke="#2b3a8c" stroke-width="1" fill="none"/><line x1="3" y1="484.5" x2="1285" y2="484.5" stroke="#2b3a8c" stroke-width="1"/><path d="M4.5,478.7 L6.5,478.6 L8.5,478.2 L10.5,477.8 L13.5,477.0 L15.5,475.9 L17.5,474.9 L19.5,473.9 L21.5,473.0 L23.5,472.3 L25.5,471.6 L27.5,471.2 L30.5,471.0 L32.5,470.7 L34.5,470.4 L36.5,470.3 L38.5,470.3 L40.5,470.2 L42.5,470.1 L44.5,470.2 L47.5,470.3 L49.5,470.6 L51.5,471.1 L53.5,471.9 L55.5,473.2 L57.5,475.0 L59.5,476.9 L61.5,478.8 L63.5,480.6 L66.5,482.5 L68.5,484.4 L70.5,486.2 L72.5,487.9 L74.5,489.3 L76.5,490.4 L78.5,491.2 L80.5,491.6 L83.5,492.0 L85.5,492.4 L87.5,492.7 L89.5,493.0 L91.5,493.3 L93.5,493.6 L95.5,493.9 L97.5,494.2 L100.5,494.4 L102.5,494.6 L104.5,494.8 L106.5,494.7 L108.5,494.8 L110.5,494.8 L112.5,494.8 L114.5,494.8 L116.5,494.8 L119.5,494.6 L121.5,494.5 L123.5,494.4 L125.5,494.3 L127.5,494.2 L129.5,494.0 L131.5,493.8 L133.5,493.5 L136.5,493.2 L138.5,492.9 L140.5,492.4 L142.5,491.9 L144.5,491.4 L146.5,490.7 L148.5,489.9 L150.5,488.6 L153.5,487.0 L155.5,485.2 L157.5,483.3 L159.5,481.6 L161.5,480.1 L163.5,478.8 L165.5,477.8 L167.5,476.9 L169.5,476.1 L172.5,475.7 L174.5,475.5 L176.5,475.4 L178.5,475.3 L180.5,475.3 L182.5,475.3 L184.5,475.3 L186.5,475.2 L189.5,475.1 L191.5,475.0 L193.5,474.8 L195.5,474.5 L197.5,474.2 L199.5,473.9 L201.5,473.3 L203.5,472.8 L206.5,472.3 L208.5,471.9 L210.5,471.6 L212.5,471.4 L214.5,471.2 L216.5,471.3 L218.5,471.2 L220.5,471.3 L222.5,471.4 L225.5,471.6 L227.5,471.9 L229.5,472.1 L231.5,472.3 L233.5,472.5 L235.5,472.6 L237.5,472.6 L239.5,472.3 L242.5,471.9 L244.5,471.6 L246.5,471.3 L248.5,471.1 L250.5,470.9 L252.5,470.8 L254.5,470.9 L256.5,471.1 L259.5,471.6 L261.5,472.3 L263.5,472.9 L265.5,473.5 L267.5,473.9 L269.5,474.4 L271.5,474.8 L273.5,475.1 L275.5,475.5 L278.5,475.8 L280.5,476.1 L282.5,476.3 L284.5,476.3 L286.5,476.2 L288.5,476.1 L290.5,476.1 L292.5,476.1 L295.5,476.2 L297.5,476.4 L299.5,476.7 L301.5,476.9 L303.5,477.1 L305.5,477.2 L307.5,477.2 L309.5,477.2 L312.5,477.1 L314.5,477.0 L316.5,476.9 L318.5,477.1 L320.5,477.5 L322.5,478.0 L324.5,478.7 L326.5,479.5 L328.5,480.3 L331.5,481.4 L333.5,482.6 L335.5,483.9 L337.5,485.1 L339.5,486.2 L341.5,487.4 L343.5,488.5 L345.5,489.4 L348.5,490.1 L350.5,490.6 L352.5,490.9 L354.5,491.0 L356.5,490.9 L358.5,490.6 L360.5,490.3 L362.5,489.8 L365.5,489.3 L367.5,488.7 L369.5,487.9 L371.5,487.2 L373.5,486.5 L375.5,485.9 L377.5,485.3 L379.5,484.8 L381.5,484.4 L384.5,484.2 L386.5,484.2 L388.5,484.2 L390.5,484.5 L392.5,484.9 L394.5,485.2 L396.5,485.4 L398.5,485.6 L401.5,486.0 L403.5,486.4 L405.5,486.7 L407.5,487.1 L409.5,487.6 L411.5,488.1 L413.5,488.8 L415.5,489.4 L418.5,490.0 L420.5,490.4 L422.5,490.7 L424.5,491.0 L426.5,491.4 L428.5,491.7 L430.5,492.0 L432.5,492.3 L434.5,492.7 L437.5,492.9 L439.5,493.0 L441.5,493.2 L443.5,493.5 L445.5,493.9 L447.5,494.5 L449.5,495.0 L451.5,495.3 L454.5,495.3 L456.5,495.1 L458.5,494.9 L460.5,494.8 L462.5,494.7 L464.5,494.7 L466.5,494.7 L468.5,494.4 L471.5,494.1 L473.5,493.6 L475.5,492.9 L477.5,492.3 L479.5,491.9 L481.5,491.6 L483.5,491.4 L485.5,491.2 L487.5,491.0 L490.5,490.9 L492.5,490.6 L494.5,490.2 L496.5,489.6 L498.5,488.9 L500.5,488.2 L502.5,487.4 L504.5,486.7 L507.5,485.9 L509.5,485.0 L511.5,484.1 L513.5,483.3 L515.5,482.4 L517.5,481.6 L519.5,480.8 L521.5,479.9 L524.5,479.2 L526.5,478.6 L528.5,478.1 L530.5,477.9 L532.5,478.0 L534.5,478.4 L536.5,479.2 L538.5,480.0 L540.5,480.7 L543.5,481.2 L545.5,481.5 L547.5,481.5 L549.5,481.5 L551.5,481.4 L553.5,481.4 L555.5,481.5 L557.5,481.7 L560.5,482.1 L562.5,482.7 L564.5,483.4 L566.5,484.0 L568.5,484.6 L570.5,485.1 L572.5,485.5 L574.5,485.9 L577.5,486.0 L579.5,486.2 L581.5,486.0 L583.5,485.6 L585.5,485.0 L587.5,484.2 L589.5,483.1 L591.5,481.8 L593.5,480.6 L596.5,479.5 L598.5,478.5 L600.5,477.8 L602.5,477.3 L604.5,476.7 L606.5,475.9 L608.5,474.9 L610.5,473.9 L613.5,473.0 L615.5,472.3 L617.5,471.6 L619.5,470.8 L621.5,469.9 L623.5,468.9 L625.5,468.1 L627.5,467.3 L630.5,466.6 L632.5,465.9 L634.5,465.3 L636.5,464.9 L638.5,465.1 L640.5,465.9 L642.5,466.8 L644.5,467.7 L646.5,468.7 L649.5,469.8 L651.5,470.9 L653.5,472.0 L655.5,473.2 L657.5,474.4 L659.5,475.7 L661.5,477.1 L663.5,478.3 L666.5,479.4 L668.5,480.3 L670.5,481.0 L672.5,481.4 L674.5,481.7 L676.5,481.8 L678.5,482.0 L680.5,482.2 L683.5,482.4 L685.5,482.6 L687.5,482.8 L689.5,482.9 L691.5,482.9 L693.5,482.8 L695.5,482.4 L697.5,482.0 L699.5,481.4 L702.5,480.5 L704.5,479.6 L706.5,478.9 L708.5,478.4 L710.5,478.2 L712.5,478.5 L714.5,478.8 L716.5,479.2 L719.5,479.8 L721.5,480.5 L723.5,481.3 L725.5,482.1 L727.5,483.0 L729.5,483.9 L731.5,484.6 L733.5,485.5 L736.5,486.3 L738.5,487.1 L740.5,487.5 L742.5,487.9 L744.5,488.4 L746.5,488.8 L748.5,489.0 L750.5,489.1 L752.5,489.0 L755.5,488.6 L757.5,488.1 L759.5,487.6 L761.5,487.3 L763.5,487.3 L765.5,487.2 L767.5,487.2 L769.5,487.3 L772.5,487.5 L774.5,487.8 L776.5,488.2 L778.5,488.6 L780.5,489.0 L782.5,489.5 L784.5,490.1 L786.5,490.4 L789.5,490.7 L791.5,490.9 L793.5,491.0 L795.5,491.2 L797.5,491.6 L799.5,491.9 L801.5,492.1 L803.5,491.9 L805.5,491.4 L808.5,490.7 L810.5,490.0 L812.5,489.3 L814.5,488.8 L816.5,488.3 L818.5,488.0 L820.5,487.8 L822.5,487.7 L825.5,487.8 L827.5,488.1 L829.5,488.3 L831.5,488.5 L833.5,488.4 L835.5,488.1 L837.5,487.6 L839.5,486.8 L842.5,485.9 L844.5,484.8 L846.5,483.6 L848.5,482.5 L850.5,481.7 L852.5,481.4 L854.5,481.4 L856.5,481.6 L858.5,481.8 L861.5,482.1 L863.5,482.6 L865.5,483.2 L867.5,483.9 L869.5,484.6 L871.5,485.3 L873.5,485.8 L875.5,486.4 L878.5,487.0 L880.5,487.7 L882.5,488.4 L884.5,489.2 L886.5,490.1 L888.5,491.0 L890.5,492.1 L892.5,493.2 L895.5,494.5 L897.5,495.8 L899.5,497.2 L901.5,498.6 L903.5,499.7 L905.5,500.5 L907.5,501.1 L909.5,501.4 L911.5,501.6 L914.5,501.7 L916.5,501.7 L918.5,501.6 L920.5,501.4 L922.5,501.0 L924.5,500.5 L926.5,500.0 L928.5,499.5 L931.5,499.1 L933.5,498.6 L935.5,498.1 L937.5,497.5 L939.5,497.0 L941.5,496.7 L943.5,496.5 L945.5,496.5 L948.5,496.4 L950.5,496.4 L952.5,496.1 L954.5,495.8 L956.5,495.5 L958.5,495.2 L960.5,494.6 L962.5,493.9 L964.5,492.9 L967.5,491.8 L969.5,490.7 L971.5,489.6 L973.5,488.6 L975.5,487.8 L977.5,487.2 L979.5,486.9 L981.5,486.7 L984.5,486.6 L986.5,486.3 L988.5,486.0 L990.5,485.5 L992.5,484.9 L994.5,484.5 L996.5,484.3 L998.5,484.4 L1001.5,484.9 L1003.5,485.5 L1005.5,486.2 L1007.5,486.9 L1009.5,487.7 L1011.5,488.4 L1013.5,489.3 L1015.5,490.2 L1017.5,491.0 L1020.5,491.7 L1022.5,492.3 L1024.5,492.6 L1026.5,492.5 L1028.5,491.7 L1030.5,490.4 L1032.5,489.1 L1034.5,487.9 L1037.5,486.7 L1039.5,485.6 L1041.5,484.6 L1043.5,483.7 L1045.5,482.7 L1047.5,481.9 L1049.5,481.3 L1051.5,480.8 L1054.5,480.5 L1056.5,480.3 L1058.5,480.1 L1060.5,479.9 L1062.5,479.8 L1064.5,479.7 L1066.5,479.7 L1068.5,479.9 L1070.5,480.3 L1073.5,481.0 L1075.5,481.9 L1077.5,482.7 L1079.5,483.2 L1081.5,483.5 L1083.5,483.7 L1085.5,483.7 L1087.5,483.6 L1090.5,483.4 L1092.5,483.4 L1094.5,483.6 L1096.5,483.9 L1098.5,484.4 L1100.5,485.1 L1102.5,485.9 L1104.5,486.8 L1107.5,487.5 L1109.5,488.3 L1111.5,489.0 L1113.5,489.7 L1115.5,490.6 L1117.5,491.3 L1119.5,492.0 L1121.5,492.4 L1123.5,492.8 L1126.5,493.2 L1128.5,493.3 L1130.5,493.0 L1132.5,492.3 L1134.5,491.3 L1136.5,490.3 L1138.5,489.3 L1140.5,488.3 L1143.5,487.0 L1145.5,485.5 L1147.5,484.0 L1149.5,482.4 L1151.5,481.1 L1153.5,479.9 L1155.5,478.8 L1157.5,477.8 L1160.5,477.0 L1162.5,476.2 L1164.5,475.6 L1166.5,475.3 L1168.5,475.1 L1170.5,475.1 L1172.5,475.1 L1174.5,474.9 L1176.5,474.4 L1179.5,473.6 L1181.5,472.6 L1183.5,471.3 L1185.5,470.1 L1187.5,468.9 L1189.5,467.8 L1191.5,466.7 L1193.5,465.5 L1196.5,464.3 L1198.5,463.3 L1200.5,462.8 L1202.5,462.4 L1204.5,462.2 L1206.5,462.1 L1208.5,462.3 L1210.5,462.8 L1213.5,463.4 L1215.5,464.1 L1217.5,464.7 L1219.5,465.4 L1221.5,466.2 L1223.5,467.5 L1225.5,469.3 L1227.5,471.3 L1229.5,473.4 L1232.5,475.2 L1234.5,476.7 L1236.5,477.8 L1238.5,478.4 L1240.5,478.7 L1242.5,478.8 L1244.5,478.8 L1246.5,478.7 L1249.5,478.5 L1251.5,478.2 L1253.5,478.0 L1255.5,477.8 L1257.5,477.4 L1259.5,477.1 L1261.5,476.6 L1263.5,476.1 L1266.5,475.6 L1268.5,475.3 L1270.5,474.9 L1272.5,474.5 L1274.5,473.9" fill="none" stroke="#000000" stroke-width="1" stroke-dasharray="18 6"/><path d="M4.5,478.6 L6.5,478.1 L8.5,477.0 L10.5,476.0 L13.5,473.8 L15.5,471.6 L17.5,470.8 L19.5,470.2 L21.5,469.4 L23.5,469.1 L25.5,469.2 L27.5,469.6 L30.5,469.9 L32.5,469.6 L34.5,469.4 L36.5,469.7 L38.5,470.1 L40.5,469.9 L42.5,470.0 L44.5,470.3 L47.5,470.7 L49.5,471.8 L51.5,472.9 L53.5,475.2 L55.5,478.5 L57.5,482.2 L59.5,484.6 L61.5,486.3 L63.5,487.9 L66.5,489.8 L68.5,492.0 L70.5,493.5 L72.5,494.6 L74.5,494.8 L76.5,495.0 L78.5,494.5 L80.5,493.1 L83.5,493.6 L85.5,493.8 L87.5,494.0 L89.5,494.1 L91.5,494.6 L93.5,494.8 L95.5,495.1 L97.5,495.4 L100.5,495.4 L102.5,495.4 L104.5,495.2 L106.5,494.7 L108.5,494.9 L110.5,494.7 L112.5,495.0 L114.5,495.0 L116.5,494.6 L119.5,494.1 L121.5,494.0 L123.5,493.9 L125.5,494.1 L127.5,493.5 L129.5,493.3 L131.5,492.9 L133.5,492.5 L136.5,492.1 L138.5,491.3 L140.5,490.8 L142.5,490.0 L144.5,489.2 L146.5,488.2 L148.5,486.5 L150.5,483.6 L153.5,480.7 L155.5,477.7 L157.5,475.9 L159.5,474.8 L161.5,474.0 L163.5,473.9 L165.5,473.5 L167.5,473.4 L169.5,473.1 L172.5,473.8 L174.5,474.7 L176.5,474.9 L178.5,475.0 L180.5,475.2 L182.5,475.3 L184.5,475.1 L186.5,475.0 L189.5,474.4 L191.5,474.5 L193.5,474.1 L195.5,473.6 L197.5,472.8 L199.5,472.5 L201.5,471.1 L203.5,470.6 L206.5,470.6 L208.5,470.3 L210.5,470.4 L212.5,470.4 L214.5,470.7 L216.5,471.3 L218.5,471.0 L220.5,471.5 L222.5,472.0 L225.5,472.4 L227.5,472.9 L229.5,472.9 L231.5,473.4 L233.5,473.3 L235.5,472.9 L237.5,472.5 L239.5,471.3 L242.5,470.3 L244.5,470.5 L246.5,470.0 L248.5,470.2 L250.5,470.2 L252.5,470.5 L254.5,471.1 L256.5,472.1 L259.5,473.7 L261.5,474.8 L263.5,475.4 L265.5,475.8 L267.5,475.7 L269.5,476.2 L271.5,476.3 L273.5,476.6 L275.5,477.2 L278.5,477.1 L280.5,477.0 L282.5,477.1 L284.5,476.5 L286.5,475.9 L288.5,475.8 L290.5,475.7 L292.5,476.1 L295.5,476.5 L297.5,477.2 L299.5,477.9 L301.5,477.8 L303.5,477.9 L305.5,477.8 L307.5,477.3 L309.5,477.2 L312.5,476.6 L314.5,476.4 L316.5,476.7 L318.5,477.6 L320.5,479.1 L322.5,480.3 L324.5,481.5 L326.5,482.5 L328.5,483.5 L331.5,485.6 L333.5,487.6 L335.5,488.9 L337.5,489.9 L339.5,490.8 L341.5,492.2 L343.5,493.0 L345.5,492.8 L348.5,493.0 L350.5,492.5 L352.5,492.1 L354.5,491.5 L356.5,490.6 L358.5,489.4 L360.5,489.1 L362.5,488.0 L365.5,487.0 L367.5,486.3 L369.5,485.0 L371.5,484.2 L373.5,483.8 L375.5,483.3 L377.5,483.0 L379.5,482.9 L381.5,482.9 L384.5,483.3 L386.5,484.0 L388.5,484.6 L390.5,485.7 L392.5,486.2 L394.5,486.4 L396.5,486.1 L398.5,486.7 L401.5,487.5 L403.5,487.9 L405.5,488.3 L407.5,488.6 L409.5,489.4 L411.5,490.4 L413.5,491.4 L415.5,492.0 L418.5,492.1 L420.5,492.0 L422.5,491.8 L424.5,492.5 L426.5,493.0 L428.5,492.9 L430.5,493.3 L432.5,493.5 L434.5,494.1 L437.5,493.9 L439.5,493.5 L441.5,493.7 L443.5,494.7 L445.5,495.5 L447.5,497.0 L449.5,497.0 L451.5,496.4 L454.5,495.2 L456.5,494.4 L458.5,494.2 L460.5,494.3 L462.5,494.3 L464.5,494.7 L466.5,494.5 L468.5,493.6 L471.5,492.7 L473.5,491.4 L475.5,490.4 L477.5,489.9 L479.5,490.2 L481.5,490.2 L483.5,490.5 L485.5,490.5 L487.5,490.5 L490.5,490.1 L492.5,489.7 L494.5,488.6 L496.5,487.3 L498.5,486.1 L500.5,485.4 L502.5,484.3 L504.5,483.8 L507.5,482.7 L509.5,481.6 L511.5,480.2 L513.5,480.0 L515.5,479.2 L517.5,478.3 L519.5,477.3 L521.5,476.6 L524.5,476.2 L526.5,475.9 L528.5,476.2 L530.5,477.0 L532.5,478.3 L534.5,480.4 L536.5,482.0 L538.5,483.2 L540.5,483.5 L543.5,483.4 L545.5,482.4 L547.5,481.8 L549.5,481.3 L551.5,481.3 L553.5,481.3 L555.5,481.8 L557.5,482.6 L560.5,483.6 L562.5,485.3 L564.5,486.2 L566.5,486.6 L568.5,486.8 L570.5,486.9 L572.5,487.4 L574.5,487.2 L577.5,486.8 L579.5,486.6 L581.5,485.3 L583.5,484.0 L585.5,482.6 L587.5,481.1 L589.5,478.7 L591.5,476.7 L593.5,475.6 L596.5,474.9 L598.5,474.6 L600.5,475.2 L602.5,475.4 L604.5,474.3 L606.5,472.6 L608.5,470.8 L610.5,469.9 L613.5,469.4 L615.5,469.3 L617.5,468.7 L619.5,467.5 L621.5,466.3 L623.5,465.2 L625.5,464.8 L627.5,464.0 L630.5,463.8 L632.5,463.2 L634.5,462.8 L636.5,463.3 L638.5,466.0 L640.5,469.0 L642.5,470.2 L644.5,471.7 L646.5,472.6 L649.5,474.1 L651.5,475.1 L653.5,476.6 L655.5,477.9 L657.5,479.4 L659.5,480.8 L661.5,482.8 L663.5,483.2 L666.5,483.6 L668.5,483.9 L670.5,483.8 L672.5,483.0 L674.5,482.8 L676.5,482.3 L678.5,482.7 L680.5,483.0 L683.5,483.2 L685.5,483.6 L687.5,483.6 L689.5,483.3 L691.5,482.8 L693.5,482.2 L695.5,481.1 L697.5,480.3 L699.5,478.8 L702.5,477.2 L704.5,476.0 L706.5,475.8 L708.5,476.5 L710.5,477.6 L712.5,479.3 L714.5,480.0 L716.5,481.0 L719.5,482.0 L721.5,483.2 L723.5,484.4 L725.5,485.6 L727.5,486.5 L729.5,487.2 L731.5,487.8 L733.5,488.7 L736.5,489.7 L738.5,490.1 L740.5,489.5 L742.5,489.4 L744.5,490.1 L746.5,490.5 L748.5,490.0 L750.5,489.3 L752.5,488.5 L755.5,487.2 L757.5,486.1 L759.5,485.6 L761.5,486.1 L763.5,487.0 L765.5,486.9 L767.5,487.1 L769.5,487.7 L772.5,488.4 L774.5,489.1 L776.5,489.5 L778.5,490.1 L780.5,490.6 L782.5,491.7 L784.5,492.3 L786.5,491.8 L789.5,492.0 L791.5,491.4 L793.5,491.4 L795.5,492.3 L797.5,493.0 L799.5,493.2 L801.5,492.6 L803.5,491.1 L805.5,489.6 L808.5,487.9 L810.5,486.9 L812.5,486.9 L814.5,486.4 L816.5,486.5 L818.5,486.8 L820.5,487.0 L822.5,487.4 L825.5,488.2 L827.5,489.1 L829.5,489.4 L831.5,489.2 L833.5,488.1 L835.5,486.9 L837.5,485.5 L839.5,483.8 L842.5,482.0 L844.5,480.5 L846.5,479.0 L848.5,478.1 L850.5,478.5 L852.5,480.2 L854.5,481.4 L856.5,482.2 L858.5,482.8 L861.5,483.4 L863.5,484.6 L865.5,485.7 L867.5,486.5 L869.5,487.6 L871.5,488.0 L873.5,488.0 L875.5,488.7 L878.5,489.3 L880.5,490.4 L882.5,491.5 L884.5,492.5 L886.5,493.5 L888.5,494.8 L890.5,496.2 L892.5,497.8 L895.5,499.4 L897.5,501.1 L899.5,503.0 L901.5,504.0 L903.5,504.1 L905.5,503.8 L907.5,503.5 L909.5,502.8 L911.5,502.5 L914.5,501.9 L916.5,501.7 L918.5,501.2 L920.5,500.4 L922.5,499.4 L924.5,498.5 L926.5,497.9 L928.5,497.8 L931.5,497.3 L933.5,496.7 L935.5,495.9 L937.5,495.3 L939.5,495.0 L941.5,495.5 L943.5,495.7 L945.5,496.3 L948.5,496.4 L950.5,496.2 L952.5,494.8 L954.5,494.5 L956.5,494.2 L958.5,494.0 L960.5,492.5 L962.5,490.8 L964.5,488.8 L967.5,487.6 L969.5,486.1 L971.5,485.4 L973.5,484.7 L975.5,484.7 L977.5,484.8 L979.5,485.5 L981.5,486.1 L984.5,486.0 L986.5,485.2 L988.5,484.6 L990.5,483.5 L992.5,482.8 L994.5,482.6 L996.5,483.7 L998.5,485.0 L1001.5,486.5 L1003.5,487.9 L1005.5,489.1 L1007.5,489.8 L1009.5,490.6 L1011.5,491.6 L1013.5,492.7 L1015.5,493.7 L1017.5,494.3 L1020.5,494.5 L1022.5,494.5 L1024.5,493.9 L1026.5,492.0 L1028.5,488.6 L1030.5,485.2 L1032.5,484.1 L1034.5,482.8 L1037.5,481.9 L1039.5,481.2 L1041.5,480.8 L1043.5,480.0 L1045.5,478.8 L1047.5,478.7 L1049.5,478.8 L1051.5,479.0 L1054.5,479.1 L1056.5,479.5 L1058.5,479.5 L1060.5,479.3 L1062.5,479.3 L1064.5,479.2 L1066.5,479.8 L1068.5,480.9 L1070.5,481.8 L1073.5,483.9 L1075.5,485.4 L1077.5,485.8 L1079.5,485.1 L1081.5,485.0 L1083.5,484.5 L1085.5,483.6 L1087.5,483.0 L1090.5,483.0 L1092.5,483.4 L1094.5,484.3 L1096.5,485.2 L1098.5,486.3 L1100.5,487.8 L1102.5,489.3 L1104.5,490.2 L1107.5,490.5 L1109.5,491.3 L1111.5,492.0 L1113.5,492.7 L1115.5,493.8 L1117.5,494.3 L1119.5,494.6 L1121.5,494.4 L1123.5,494.4 L1126.5,494.5 L1128.5,493.8 L1130.5,491.7 L1132.5,489.6 L1134.5,487.5 L1136.5,486.4 L1138.5,485.3 L1140.5,484.0 L1143.5,482.0 L1145.5,479.7 L1147.5,477.6 L1149.5,476.2 L1151.5,476.0 L1153.5,474.8 L1155.5,474.6 L1157.5,473.9 L1160.5,473.5 L1162.5,473.2 L1164.5,473.2 L1166.5,474.1 L1168.5,474.2 L1170.5,475.1 L1172.5,475.2 L1174.5,474.2 L1176.5,472.5 L1179.5,470.4 L1181.5,468.3 L1183.5,466.4 L1185.5,465.4 L1187.5,464.1 L1189.5,463.3 L1191.5,462.4 L1193.5,460.4 L1196.5,459.4 L1198.5,459.5 L1200.5,460.6 L1202.5,460.7 L1204.5,461.3 L1206.5,461.9 L1208.5,463.0 L1210.5,465.0 L1213.5,465.7 L1215.5,466.7 L1217.5,467.3 L1219.5,468.0 L1221.5,469.7 L1223.5,472.8 L1225.5,476.2 L1227.5,479.2 L1229.5,481.7 L1232.5,482.5 L1234.5,482.8 L1236.5,482.0 L1238.5,481.0 L1240.5,480.0 L1242.5,479.0 L1244.5,478.8 L1246.5,478.1 L1249.5,477.7 L1251.5,477.3 L1253.5,477.1 L1255.5,476.8 L1257.5,476.2 L1259.5,475.5 L1261.5,474.6 L1263.5,474.1 L1266.5,473.9 L1268.5,474.0 L1270.5,473.4 L1272.5,472.7 L1274.5,471.4" fill="none" stroke="#d04818" stroke-width="1" /><line x1="3" y1="535.5" x2="1285" y2="535.5" stroke="#2b3a8c" stroke-width="1"/><line x1="3" y1="554.5" x2="1285" y2="554.5" stroke="#2b3a8c" stroke-width="1"/><path d="M4.5,540.4 L6.5,539.0 L8.5,536.7 L10.5,536.0 L13.5,533.3 L15.5,532.4 L17.5,536.3 L19.5,536.0 L21.5,535.2 L23.5,536.0 L25.5,536.7 L27.5,537.7 L30.5,537.1 L32.5,535.5 L34.5,535.4 L36.5,537.0 L38.5,537.0 L40.5,535.2 L42.5,535.8 L44.5,536.7 L47.5,536.7 L49.5,540.3 L51.5,541.0 L53.5,546.9 L55.5,551.1 L57.5,553.4 L59.5,550.8 L61.5,550.3 L63.5,551.2 L66.5,552.6 L68.5,553.9 L70.5,553.7 L72.5,553.7 L74.5,550.8 L76.5,551.4 L78.5,549.2 L80.5,545.7 L83.5,550.0 L85.5,549.9 L87.5,550.1 L89.5,550.4 L91.5,551.6 L93.5,551.0 L95.5,551.7 L97.5,552.3 L100.5,551.7 L102.5,551.9 L104.5,551.9 L106.5,550.4 L108.5,552.4 L110.5,551.3 L112.5,553.0 L114.5,552.0 L116.5,550.7 L119.5,550.3 L121.5,551.7 L123.5,551.9 L125.5,553.0 L127.5,549.6 L129.5,550.8 L131.5,550.1 L133.5,549.6 L136.5,550.2 L138.5,547.3 L140.5,548.1 L142.5,546.5 L144.5,545.9 L146.5,544.1 L148.5,540.3 L150.5,536.2 L153.5,534.7 L155.5,533.5 L157.5,535.7 L159.5,537.2 L161.5,536.9 L163.5,539.2 L165.5,538.1 L167.5,538.5 L169.5,537.7 L172.5,541.5 L174.5,542.6 L176.5,540.5 L178.5,540.1 L180.5,540.4 L182.5,539.7 L184.5,538.8 L186.5,538.6 L189.5,536.8 L191.5,539.4 L193.5,537.5 L195.5,537.1 L197.5,535.8 L199.5,536.6 L201.5,534.0 L203.5,536.5 L206.5,537.6 L208.5,536.7 L210.5,537.2 L212.5,536.8 L214.5,537.2 L216.5,538.7 L218.5,536.3 L220.5,539.1 L222.5,539.4 L225.5,538.7 L227.5,539.5 L229.5,537.8 L231.5,539.5 L233.5,538.1 L235.5,536.6 L237.5,536.2 L239.5,534.1 L242.5,533.7 L244.5,537.9 L246.5,536.2 L248.5,538.3 L250.5,537.5 L252.5,538.5 L254.5,539.0 L256.5,541.2 L259.5,544.1 L261.5,543.1 L263.5,541.8 L265.5,541.3 L267.5,539.9 L269.5,541.6 L271.5,540.8 L273.5,541.3 L275.5,542.4 L278.5,540.3 L280.5,540.0 L282.5,540.7 L284.5,538.4 L286.5,537.4 L288.5,539.3 L290.5,539.1 L292.5,541.2 L295.5,541.0 L297.5,542.6 L299.5,543.0 L301.5,540.3 L303.5,540.9 L305.5,539.7 L307.5,538.0 L309.5,539.6 L312.5,537.8 L314.5,538.7 L316.5,540.6 L318.5,543.9 L320.5,546.7 L322.5,547.0 L324.5,547.4 L326.5,548.1 L328.5,548.4 L331.5,553.1 L333.5,553.8 L335.5,552.7 L337.5,552.9 L339.5,553.1 L341.5,555.4 L343.5,553.8 L345.5,549.6 L348.5,551.0 L350.5,548.2 L352.5,548.7 L354.5,547.7 L356.5,546.0 L358.5,544.3 L360.5,547.0 L362.5,544.0 L365.5,543.8 L367.5,543.9 L369.5,541.6 L371.5,542.4 L373.5,543.5 L375.5,542.9 L377.5,543.0 L379.5,544.1 L381.5,544.1 L384.5,546.0 L386.5,547.8 L388.5,548.3 L390.5,550.5 L392.5,548.6 L394.5,547.6 L396.5,545.5 L398.5,549.0 L401.5,550.2 L403.5,549.0 L405.5,549.6 L407.5,550.1 L409.5,551.9 L411.5,553.1 L413.5,554.0 L415.5,553.5 L418.5,551.7 L420.5,550.9 L422.5,551.0 L424.5,554.0 L426.5,553.9 L428.5,551.9 L430.5,553.5 L432.5,553.7 L434.5,555.0 L437.5,551.7 L439.5,550.3 L441.5,552.6 L443.5,554.9 L445.5,555.4 L447.5,557.1 L449.5,551.7 L451.5,549.8 L454.5,547.4 L456.5,548.4 L458.5,549.7 L460.5,550.6 L462.5,550.7 L464.5,552.2 L466.5,550.1 L468.5,547.5 L471.5,547.1 L473.5,545.6 L475.5,545.5 L477.5,546.9 L479.5,549.5 L481.5,548.8 L483.5,549.9 L485.5,548.8 L487.5,549.2 L490.5,547.9 L492.5,547.2 L494.5,544.3 L496.5,542.7 L498.5,542.4 L500.5,543.5 L502.5,541.2 L504.5,543.2 L507.5,540.9 L509.5,539.8 L511.5,538.5 L513.5,542.0 L515.5,540.1 L517.5,539.4 L519.5,538.2 L521.5,538.6 L524.5,538.7 L526.5,538.6 L528.5,540.6 L530.5,543.5 L532.5,545.7 L534.5,549.1 L536.5,549.0 L538.5,548.6 L540.5,545.6 L543.5,544.2 L545.5,541.3 L547.5,541.8 L549.5,541.7 L551.5,543.0 L553.5,543.1 L555.5,545.2 L557.5,547.2 L560.5,548.0 L562.5,551.2 L564.5,549.2 L566.5,547.7 L568.5,547.3 L570.5,547.6 L572.5,548.8 L574.5,546.6 L577.5,545.2 L579.5,546.3 L581.5,541.8 L583.5,540.7 L585.5,539.8 L587.5,538.4 L589.5,535.7 L591.5,535.2 L593.5,537.6 L596.5,537.6 L598.5,538.3 L600.5,541.9 L602.5,540.8 L604.5,537.4 L606.5,535.7 L608.5,534.7 L610.5,536.4 L613.5,536.6 L615.5,537.2 L617.5,535.7 L619.5,534.3 L621.5,533.6 L623.5,533.2 L625.5,534.1 L627.5,533.2 L630.5,534.0 L632.5,532.9 L634.5,532.8 L636.5,535.5 L638.5,543.5 L640.5,545.2 L642.5,542.2 L644.5,543.1 L646.5,542.4 L649.5,544.0 L651.5,543.5 L653.5,545.1 L655.5,545.2 L657.5,546.6 L659.5,546.9 L661.5,549.4 L663.5,545.6 L666.5,545.5 L668.5,545.9 L670.5,544.5 L672.5,542.5 L674.5,544.0 L676.5,542.7 L678.5,545.4 L680.5,545.2 L683.5,545.1 L685.5,545.7 L687.5,544.7 L689.5,543.9 L691.5,542.7 L693.5,542.0 L695.5,540.0 L697.5,540.3 L699.5,537.7 L702.5,536.5 L704.5,536.9 L706.5,539.8 L708.5,543.1 L710.5,544.5 L712.5,547.2 L714.5,544.8 L716.5,546.3 L719.5,546.7 L721.5,547.8 L723.5,548.4 L725.5,549.4 L727.5,549.2 L729.5,549.4 L731.5,549.2 L733.5,551.2 L736.5,551.8 L738.5,550.5 L740.5,546.3 L742.5,548.0 L744.5,550.3 L746.5,549.8 L748.5,547.0 L750.5,545.9 L752.5,545.1 L755.5,542.8 L757.5,542.9 L759.5,544.4 L761.5,547.7 L763.5,549.2 L765.5,546.4 L767.5,547.0 L769.5,548.9 L772.5,549.5 L774.5,550.1 L776.5,549.3 L778.5,550.5 L780.5,551.0 L782.5,552.9 L784.5,551.9 L786.5,547.8 L789.5,549.8 L791.5,547.4 L793.5,548.7 L795.5,551.4 L797.5,551.3 L799.5,550.8 L801.5,547.7 L803.5,544.6 L805.5,543.9 L808.5,542.4 L810.5,543.6 L812.5,546.4 L814.5,545.1 L816.5,546.4 L818.5,547.2 L820.5,547.4 L822.5,548.0 L825.5,549.8 L827.5,550.5 L829.5,549.1 L831.5,547.3 L833.5,544.3 L835.5,543.1 L837.5,541.8 L839.5,540.0 L842.5,539.0 L844.5,538.5 L846.5,537.8 L848.5,538.8 L850.5,543.2 L852.5,547.5 L854.5,546.8 L856.5,546.3 L858.5,546.1 L861.5,546.7 L863.5,548.8 L865.5,549.2 L867.5,549.1 L869.5,550.6 L871.5,548.6 L873.5,547.8 L875.5,549.8 L878.5,550.2 L880.5,552.2 L882.5,553.0 L884.5,553.6 L886.5,554.3 L888.5,555.5 L890.5,556.5 L892.5,557.6 L895.5,558.3 L897.5,558.9 L899.5,559.9 L901.5,557.9 L903.5,555.5 L905.5,555.0 L907.5,555.3 L909.5,553.4 L911.5,554.6 L914.5,553.8 L916.5,554.6 L918.5,554.6 L920.5,553.0 L922.5,551.4 L924.5,552.0 L926.5,552.7 L928.5,553.9 L931.5,552.6 L933.5,552.2 L935.5,551.6 L937.5,551.6 L939.5,552.9 L941.5,555.4 L943.5,555.2 L945.5,556.5 L948.5,554.6 L950.5,554.5 L952.5,547.1 L954.5,550.4 L956.5,550.3 L958.5,550.9 L960.5,545.3 L962.5,544.1 L964.5,541.8 L967.5,543.7 L969.5,542.0 L971.5,543.7 L973.5,543.5 L975.5,545.4 L977.5,546.1 L979.5,547.8 L981.5,548.4 L984.5,545.8 L986.5,543.3 L988.5,543.7 L990.5,541.5 L992.5,542.2 L994.5,543.7 L996.5,547.8 L998.5,549.1 L1001.5,550.4 L1003.5,551.0 L1005.5,551.2 L1007.5,550.5 L1009.5,551.6 L1011.5,552.4 L1013.5,553.6 L1015.5,553.9 L1017.5,553.7 L1020.5,553.1 L1022.5,552.7 L1024.5,549.8 L1026.5,543.8 L1028.5,538.8 L1030.5,537.3 L1032.5,542.6 L1034.5,541.7 L1037.5,542.1 L1039.5,542.0 L1041.5,542.4 L1043.5,541.0 L1045.5,539.6 L1047.5,542.4 L1049.5,542.5 L1051.5,543.0 L1054.5,542.7 L1056.5,543.5 L1058.5,542.4 L1060.5,541.4 L1062.5,542.0 L1064.5,541.5 L1066.5,544.4 L1068.5,546.7 L1070.5,546.9 L1073.5,550.9 L1075.5,550.6 L1077.5,547.1 L1079.5,543.7 L1081.5,545.1 L1083.5,544.1 L1085.5,542.3 L1087.5,542.6 L1090.5,544.4 L1092.5,545.9 L1094.5,547.6 L1096.5,548.4 L1098.5,549.5 L1100.5,551.3 L1102.5,552.1 L1104.5,551.1 L1107.5,549.5 L1109.5,551.3 L1111.5,551.8 L1113.5,552.3 L1115.5,553.9 L1117.5,552.5 L1119.5,552.3 L1121.5,551.1 L1123.5,551.7 L1126.5,552.5 L1128.5,548.7 L1130.5,543.4 L1132.5,541.9 L1134.5,541.0 L1136.5,543.1 L1138.5,542.6 L1140.5,541.2 L1143.5,538.6 L1145.5,537.0 L1147.5,536.4 L1149.5,536.9 L1151.5,540.6 L1153.5,538.0 L1155.5,540.3 L1157.5,538.9 L1160.5,539.1 L1162.5,538.8 L1164.5,539.6 L1166.5,542.5 L1168.5,540.6 L1170.5,543.0 L1172.5,541.2 L1174.5,538.6 L1176.5,536.8 L1179.5,535.6 L1181.5,534.6 L1183.5,534.2 L1185.5,535.2 L1187.5,534.2 L1189.5,534.6 L1191.5,533.8 L1193.5,532.1 L1196.5,533.1 L1198.5,535.6 L1200.5,538.3 L1202.5,536.7 L1204.5,537.4 L1206.5,537.1 L1208.5,538.6 L1210.5,541.6 L1213.5,539.5 L1215.5,540.3 L1217.5,539.5 L1219.5,539.7 L1221.5,542.7 L1223.5,546.9 L1225.5,548.5 L1227.5,549.0 L1229.5,549.3 L1232.5,545.8 L1234.5,545.1 L1236.5,542.7 L1238.5,541.7 L1240.5,541.4 L1242.5,540.7 L1244.5,542.6 L1246.5,541.2 L1249.5,541.2 L1251.5,541.0 L1253.5,540.9 L1255.5,540.5 L1257.5,539.3 L1259.5,538.6 L1261.5,537.5 L1263.5,537.7 L1266.5,538.3 L1268.5,539.3 L1270.5,537.1 L1272.5,536.3 L1274.5,534.6" fill="none" stroke="#d04818" stroke-width="1" /><rect x="2.5" y="17.5" width="1333" height="416" fill="none" stroke="#a04444" stroke-width="1"/><rect x="1285" y="17" width="2" height="417" fill="#a04444"/><rect x="2.5" y="454.5" width="1333" height="53" fill="none" stroke="#a04444" stroke-width="1"/><rect x="3" y="507" width="1282" height="1" fill="#d4dade"/><line x1="5" y1="507.5" x2="1285" y2="507.5" stroke="#a04444" stroke-width="1" stroke-dasharray="3 3"/><rect x="1285" y="454" width="2" height="54" fill="#a04444"/><rect x="2.5" y="528.5" width="1333" height="35" fill="none" stroke="#a04444" stroke-width="1"/><rect x="1285" y="528" width="2" height="36" fill="#a04444"/><rect x="2.5" y="564.5" width="1283" height="15" fill="none" stroke="#a04444" stroke-width="1"/><rect x="2" y="563" width="1284" height="2" fill="#a04444"/><rect x="1286" y="26" width="6" height="1" fill="#000"/><rect x="1286" y="66" width="6" height="1" fill="#000"/><rect x="1286" y="105" width="6" height="1" fill="#000"/><rect x="1286" y="145" width="6" height="1" fill="#000"/><rect x="1286" y="184" width="6" height="1" fill="#000"/><rect x="1286" y="224" width="6" height="1" fill="#000"/><rect x="1286" y="263" width="6" height="1" fill="#000"/><rect x="1286" y="303" width="6" height="1" fill="#000"/><rect x="1286" y="342" width="6" height="1" fill="#000"/><rect x="1286" y="381" width="6" height="1" fill="#000"/><rect x="1286" y="421" width="6" height="1" fill="#000"/><rect x="1286" y="46" width="2" height="1" fill="#000"/><rect x="1286" y="86" width="2" height="1" fill="#000"/><rect x="1286" y="125" width="2" height="1" fill="#000"/><rect x="1286" y="165" width="2" height="1" fill="#000"/><rect x="1286" y="204" width="2" height="1" fill="#000"/><rect x="1286" y="244" width="2" height="1" fill="#000"/><rect x="1286" y="283" width="2" height="1" fill="#000"/><rect x="1286" y="323" width="2" height="1" fill="#000"/><rect x="1286" y="362" width="2" height="1" fill="#000"/><rect x="1286" y="401" width="2" height="1" fill="#000"/><rect x="1286" y="461" width="6" height="1" fill="#000"/><rect x="1286" y="484" width="6" height="1" fill="#000"/><rect x="1286" y="507" width="6" height="1" fill="#000"/><rect x="1286" y="472" width="2" height="1" fill="#000"/><rect x="1286" y="496" width="2" height="1" fill="#000"/><rect x="1286" y="545" width="6" height="1" fill="#000"/><rect x="1286" y="530" width="2" height="1" fill="#000"/><rect x="1286" y="535" width="2" height="1" fill="#000"/><rect x="1286" y="540" width="2" height="1" fill="#000"/><rect x="1286" y="549" width="2" height="1" fill="#000"/><rect x="1286" y="554" width="2" height="1" fill="#000"/><rect x="1286" y="559" width="2" height="1" fill="#000"/><rect x="23" y="564" width="1" height="15" fill="#000"/><rect x="69" y="564" width="1" height="5" fill="#000"/><rect x="111" y="564" width="1" height="5" fill="#000"/><rect x="155" y="564" width="1" height="5" fill="#000"/><rect x="197" y="564" width="1" height="5" fill="#000"/><rect x="241" y="564" width="1" height="5" fill="#000"/><rect x="285" y="564" width="1" height="5" fill="#000"/><rect x="333" y="564" width="1" height="5" fill="#000"/><rect x="377" y="564" width="1" height="5" fill="#000"/><rect x="423" y="564" width="1" height="5" fill="#000"/><rect x="471" y="564" width="1" height="5" fill="#000"/><rect x="513" y="564" width="1" height="5" fill="#000"/><rect x="557" y="564" width="1" height="15" fill="#000"/><rect x="601" y="564" width="1" height="5" fill="#000"/><rect x="642" y="564" width="1" height="5" fill="#000"/><rect x="688" y="564" width="1" height="5" fill="#000"/><rect x="730" y="564" width="1" height="5" fill="#000"/><rect x="772" y="564" width="1" height="5" fill="#000"/><rect x="818" y="564" width="1" height="5" fill="#000"/><rect x="866" y="564" width="1" height="5" fill="#000"/><rect x="910" y="564" width="1" height="5" fill="#000"/><rect x="956" y="564" width="1" height="5" fill="#000"/><rect x="1002" y="564" width="1" height="5" fill="#000"/><rect x="1046" y="564" width="1" height="5" fill="#000"/><rect x="1092" y="564" width="1" height="15" fill="#000"/><rect x="1134" y="564" width="1" height="5" fill="#000"/><rect x="1178" y="564" width="1" height="5" fill="#000"/><rect x="1222" y="564" width="1" height="5" fill="#000"/><rect x="1266" y="564" width="1" height="5" fill="#000"/><rect x="23" y="17" width="1" height="3" fill="#ababab"/><rect x="23" y="454" width="1" height="3" fill="#ababab"/><rect x="23" y="528" width="1" height="3" fill="#ababab"/><rect x="69" y="17" width="1" height="3" fill="#ababab"/><rect x="69" y="454" width="1" height="3" fill="#ababab"/><rect x="69" y="528" width="1" height="3" fill="#ababab"/><rect x="111" y="17" width="1" height="3" fill="#ababab"/><rect x="111" y="454" width="1" height="3" fill="#ababab"/><rect x="111" y="528" width="1" height="3" fill="#ababab"/><rect x="155" y="17" width="1" height="3" fill="#ababab"/><rect x="155" y="454" width="1" height="3" fill="#ababab"/><rect x="155" y="528" width="1" height="3" fill="#ababab"/><rect x="197" y="17" width="1" height="3" fill="#ababab"/><rect x="197" y="454" width="1" height="3" fill="#ababab"/><rect x="197" y="528" width="1" height="3" fill="#ababab"/><rect x="241" y="17" width="1" height="3" fill="#ababab"/><rect x="241" y="454" width="1" height="3" fill="#ababab"/><rect x="241" y="528" width="1" height="3" fill="#ababab"/><rect x="285" y="17" width="1" height="3" fill="#ababab"/><rect x="285" y="454" width="1" height="3" fill="#ababab"/><rect x="285" y="528" width="1" height="3" fill="#ababab"/><rect x="333" y="17" width="1" height="3" fill="#ababab"/><rect x="333" y="454" width="1" height="3" fill="#ababab"/><rect x="333" y="528" width="1" height="3" fill="#ababab"/><rect x="377" y="17" width="1" height="3" fill="#ababab"/><rect x="377" y="454" width="1" height="3" fill="#ababab"/><rect x="377" y="528" width="1" height="3" fill="#ababab"/><rect x="423" y="17" width="1" height="3" fill="#ababab"/><rect x="423" y="454" width="1" height="3" fill="#ababab"/><rect x="423" y="528" width="1" height="3" fill="#ababab"/><rect x="471" y="17" width="1" height="3" fill="#ababab"/><rect x="471" y="454" width="1" height="3" fill="#ababab"/><rect x="471" y="528" width="1" height="3" fill="#ababab"/><rect x="513" y="17" width="1" height="3" fill="#ababab"/><rect x="513" y="454" width="1" height="3" fill="#ababab"/><rect x="513" y="528" width="1" height="3" fill="#ababab"/><rect x="557" y="17" width="1" height="3" fill="#ababab"/><rect x="557" y="454" width="1" height="3" fill="#ababab"/><rect x="557" y="528" width="1" height="3" fill="#ababab"/><rect x="601" y="17" width="1" height="3" fill="#ababab"/><rect x="601" y="454" width="1" height="3" fill="#ababab"/><rect x="601" y="528" width="1" height="3" fill="#ababab"/><rect x="642" y="17" width="1" height="3" fill="#ababab"/><rect x="642" y="454" width="1" height="3" fill="#ababab"/><rect x="642" y="528" width="1" height="3" fill="#ababab"/><rect x="688" y="17" width="1" height="3" fill="#ababab"/><rect x="688" y="454" width="1" height="3" fill="#ababab"/><rect x="688" y="528" width="1" height="3" fill="#ababab"/><rect x="730" y="17" width="1" height="3" fill="#ababab"/><rect x="730" y="454" width="1" height="3" fill="#ababab"/><rect x="730" y="528" width="1" height="3" fill="#ababab"/><rect x="772" y="17" width="1" height="3" fill="#ababab"/><rect x="772" y="454" width="1" height="3" fill="#ababab"/><rect x="772" y="528" width="1" height="3" fill="#ababab"/><rect x="818" y="17" width="1" height="3" fill="#ababab"/><rect x="818" y="454" width="1" height="3" fill="#ababab"/><rect x="818" y="528" width="1" height="3" fill="#ababab"/><rect x="866" y="17" width="1" height="3" fill="#ababab"/><rect x="866" y="454" width="1" height="3" fill="#ababab"/><rect x="866" y="528" width="1" height="3" fill="#ababab"/><rect x="910" y="17" width="1" height="3" fill="#ababab"/><rect x="910" y="454" width="1" height="3" fill="#ababab"/><rect x="910" y="528" width="1" height="3" fill="#ababab"/><rect x="956" y="17" width="1" height="3" fill="#ababab"/><rect x="956" y="454" width="1" height="3" fill="#ababab"/><rect x="956" y="528" width="1" height="3" fill="#ababab"/><rect x="1002" y="17" width="1" height="3" fill="#ababab"/><rect x="1002" y="454" width="1" height="3" fill="#ababab"/><rect x="1002" y="528" width="1" height="3" fill="#ababab"/><rect x="1046" y="17" width="1" height="3" fill="#ababab"/><rect x="1046" y="454" width="1" height="3" fill="#ababab"/><rect x="1046" y="528" width="1" height="3" fill="#ababab"/><rect x="1092" y="17" width="1" height="3" fill="#ababab"/><rect x="1092" y="454" width="1" height="3" fill="#ababab"/><rect x="1092" y="528" width="1" height="3" fill="#ababab"/><rect x="1134" y="17" width="1" height="3" fill="#ababab"/><rect x="1134" y="454" width="1" height="3" fill="#ababab"/><rect x="1134" y="528" width="1" height="3" fill="#ababab"/><rect x="1178" y="17" width="1" height="3" fill="#ababab"/><rect x="1178" y="454" width="1" height="3" fill="#ababab"/><rect x="1178" y="528" width="1" height="3" fill="#ababab"/><rect x="1222" y="17" width="1" height="3" fill="#ababab"/><rect x="1222" y="454" width="1" height="3" fill="#ababab"/><rect x="1222" y="528" width="1" height="3" fill="#ababab"/><rect x="1308" y="4" width="12" height="10" fill="#ececec"/><rect x="1308" y="4" width="11" height="1" fill="#ffffff"/><rect x="1308" y="4" width="1" height="9" fill="#ffffff"/><rect x="1318" y="5" width="1" height="8" fill="#a8a8a8"/><rect x="1309" y="12" width="10" height="1" fill="#a8a8a8"/><rect x="1319" y="4" width="1" height="10" fill="#5e5e5e"/><rect x="1308" y="13" width="12" height="1" fill="#5e5e5e"/><rect x="1311" y="6" width="6" height="5" fill="#000"/><rect x="1312" y="8" width="4" height="2" fill="#fff"/><rect x="1322" y="4" width="12" height="10" fill="#ececec"/><rect x="1322" y="4" width="11" height="1" fill="#ffffff"/><rect x="1322" y="4" width="1" height="9" fill="#ffffff"/><rect x="1332" y="5" width="1" height="8" fill="#a8a8a8"/><rect x="1323" y="12" width="10" height="1" fill="#a8a8a8"/><rect x="1333" y="4" width="1" height="10" fill="#5e5e5e"/><rect x="1322" y="13" width="12" height="1" fill="#5e5e5e"/><rect x="1325" y="6" width="1" height="1" fill="#000"/><rect x="1329" y="6" width="1" height="1" fill="#000"/><rect x="1326" y="7" width="1" height="1" fill="#000"/><rect x="1328" y="7" width="1" height="1" fill="#000"/><rect x="1327" y="8" width="1" height="1" fill="#000"/><rect x="1327" y="8" width="1" height="1" fill="#000"/><rect x="1328" y="9" width="1" height="1" fill="#000"/><rect x="1326" y="9" width="1" height="1" fill="#000"/><rect x="1329" y="10" width="1" height="1" fill="#000"/><rect x="1325" y="10" width="1" height="1" fill="#000"/><rect x="1308" y="441" width="12" height="10" fill="#ececec"/><rect x="1308" y="441" width="11" height="1" fill="#ffffff"/><rect x="1308" y="441" width="1" height="9" fill="#ffffff"/><rect x="1318" y="442" width="1" height="8" fill="#a8a8a8"/><rect x="1309" y="449" width="10" height="1" fill="#a8a8a8"/><rect x="1319" y="441" width="1" height="10" fill="#5e5e5e"/><rect x="1308" y="450" width="12" height="1" fill="#5e5e5e"/><rect x="1311" y="443" width="6" height="5" fill="#000"/><rect x="1312" y="445" width="4" height="2" fill="#fff"/><rect x="1322" y="441" width="12" height="10" fill="#ececec"/><rect x="1322" y="441" width="11" height="1" fill="#ffffff"/><rect x="1322" y="441" width="1" height="9" fill="#ffffff"/><rect x="1332" y="442" width="1" height="8" fill="#a8a8a8"/><rect x="1323" y="449" width="10" height="1" fill="#a8a8a8"/><rect x="1333" y="441" width="1" height="10" fill="#5e5e5e"/><rect x="1322" y="450" width="12" height="1" fill="#5e5e5e"/><rect x="1325" y="443" width="1" height="1" fill="#000"/><rect x="1329" y="443" width="1" height="1" fill="#000"/><rect x="1326" y="444" width="1" height="1" fill="#000"/><rect x="1328" y="444" width="1" height="1" fill="#000"/><rect x="1327" y="445" width="1" height="1" fill="#000"/><rect x="1327" y="445" width="1" height="1" fill="#000"/><rect x="1328" y="446" width="1" height="1" fill="#000"/><rect x="1326" y="446" width="1" height="1" fill="#000"/><rect x="1329" y="447" width="1" height="1" fill="#000"/><rect x="1325" y="447" width="1" height="1" fill="#000"/><rect x="1308" y="515" width="12" height="10" fill="#ececec"/><rect x="1308" y="515" width="11" height="1" fill="#ffffff"/><rect x="1308" y="515" width="1" height="9" fill="#ffffff"/><rect x="1318" y="516" width="1" height="8" fill="#a8a8a8"/><rect x="1309" y="523" width="10" height="1" fill="#a8a8a8"/><rect x="1319" y="515" width="1" height="10" fill="#5e5e5e"/><rect x="1308" y="524" width="12" height="1" fill="#5e5e5e"/><rect x="1311" y="517" width="6" height="5" fill="#000"/><rect x="1312" y="519" width="4" height="2" fill="#fff"/><rect x="1322" y="515" width="12" height="10" fill="#ececec"/><rect x="1322" y="515" width="11" height="1" fill="#ffffff"/><rect x="1322" y="515" width="1" height="9" fill="#ffffff"/><rect x="1332" y="516" width="1" height="8" fill="#a8a8a8"/><rect x="1323" y="523" width="10" height="1" fill="#a8a8a8"/><rect x="1333" y="515" width="1" height="10" fill="#5e5e5e"/><rect x="1322" y="524" width="12" height="1" fill="#5e5e5e"/><rect x="1325" y="517" width="1" height="1" fill="#000"/><rect x="1329" y="517" width="1" height="1" fill="#000"/><rect x="1326" y="518" width="1" height="1" fill="#000"/><rect x="1328" y="518" width="1" height="1" fill="#000"/><rect x="1327" y="519" width="1" height="1" fill="#000"/><rect x="1327" y="519" width="1" height="1" fill="#000"/><rect x="1328" y="520" width="1" height="1" fill="#000"/><rect x="1326" y="520" width="1" height="1" fill="#000"/><rect x="1329" y="521" width="1" height="1" fill="#000"/><rect x="1325" y="521" width="1" height="1" fill="#000"/><defs><linearGradient id="tg" x1="0" y1="0" x2="0" y2="1"><stop offset="0" stop-color="#2f62b8"/><stop offset="1" stop-color="#3aaa4a"/></linearGradient></defs><rect x="4.5" y="3.5" width="11" height="10" rx="1" fill="#fbfbfb" stroke="#5e5e5e"/><rect x="5" y="5" width="1" height="7" fill="#cfc8e6"/><rect x="6" y="5" width="4" height="7" fill="url(#tg)"/><rect x="10" y="11" width="3" height="1" fill="#c8c8c8"/><rect x="14" y="5" width="1" height="4" fill="url(#tg)"/><rect x="4.5" y="440.5" width="11" height="10" rx="1" fill="#fbfbfb" stroke="#5e5e5e"/><rect x="5" y="442" width="1" height="7" fill="#cfc8e6"/><rect x="6" y="442" width="4" height="7" fill="url(#tg)"/><rect x="10" y="448" width="3" height="1" fill="#c8c8c8"/><rect x="14" y="442" width="1" height="4" fill="url(#tg)"/><rect x="4.5" y="514.5" width="11" height="10" rx="1" fill="#fbfbfb" stroke="#5e5e5e"/><rect x="5" y="516" width="1" height="7" fill="#cfc8e6"/><rect x="6" y="516" width="4" height="7" fill="url(#tg)"/><rect x="10" y="522" width="3" height="1" fill="#c8c8c8"/><rect x="14" y="516" width="1" height="4" fill="url(#tg)"/><rect x="1288" y="88" width="23" height="14" fill="#323c8e" /><rect x="1288" y="464" width="23" height="14" fill="#c84a1c" /><rect x="1288" y="479" width="23" height="14" fill="#000000" /><rect x="1288" y="528" width="29" height="13" fill="#c84a1c" />
</svg>
<div class="t" style="left:19px;top:2px;font-size:9.4px;color:#2c3494;">PROSEGUR (M ) (5,23, 5,27, 5,09, 5,25)</div><div class="t" style="left:19px;top:439px;font-size:9.4px;color:#000;"><span style="color:#d04818">MACD (0,1072)</span> <span style="color:#f4f4f4">-</span> Media m&oacute;vil (0,0895)</div><div class="t" style="left:19px;top:513px;font-size:9.4px;color:#d04818;">RSI (Relative Strength Index) (72,3442)</div><div class="t" style="left:1315px;top:20px;font-size:11px;color:#000;">5,6</div><div class="t" style="left:1315px;top:60px;font-size:11px;color:#000;">5,4</div><div class="t" style="left:1315px;top:99px;font-size:11px;color:#000;">5,2</div><div class="t" style="left:1315px;top:139px;font-size:11px;color:#000;">5,0</div><div class="t" style="left:1315px;top:178px;font-size:11px;color:#000;">4,8</div><div class="t" style="left:1315px;top:218px;font-size:11px;color:#000;">4,6</div><div class="t" style="left:1315px;top:257px;font-size:11px;color:#000;">4,4</div><div class="t" style="left:1315px;top:297px;font-size:11px;color:#000;">4,2</div><div class="t" style="left:1315px;top:336px;font-size:11px;color:#000;">4,0</div><div class="t" style="left:1315px;top:375px;font-size:11px;color:#000;">3,8</div><div class="t" style="left:1289.5px;top:89.3px;font-size:10.5px;color:#fff;">5,25</div><div class="t" style="left:1289.8px;top:465.3px;font-size:10.5px;color:#fff;">0,11</div><div class="t" style="left:1289.5px;top:480.3px;font-size:10.5px;color:#fff;">0,09</div><div class="t" style="left:1315px;top:478px;font-size:11px;color:#000;">0,0</div><div class="t" style="left:1289px;top:527.5px;font-size:10.8px;color:#fff;">72,34</div><div class="t" style="left:1318px;top:539px;font-size:11px;color:#000;">50</div><div class="t" style="left:673px;top:52px;font-size:11px;color:#3a4a9a;">100.0</div><div class="t" style="left:673px;top:183px;font-size:11px;color:#3a4a9a;">61.8</div><div class="t" style="left:673px;top:223px;font-size:11px;color:#3a4a9a;">50.0</div><div class="t" style="left:673px;top:263px;font-size:11px;color:#3a4a9a;">38.2</div><div class="t" style="left:673px;top:314px;font-size:11px;color:#3a4a9a;">23.6</div><div class="t" style="left:673px;top:395px;font-size:11px;color:#3a4a9a;">0.0</div><div class="t" style="left:26px;top:565.7px;font-size:12px;color:#000;">2014</div><div class="t" style="left:72px;top:565.7px;font-size:12px;color:#000;">Feb</div><div class="t" style="left:114px;top:565.7px;font-size:12px;color:#000;">Mar</div><div class="t" style="left:158px;top:565.7px;font-size:12px;color:#000;">Abr</div><div class="t" style="left:200px;top:565.7px;font-size:12px;color:#000;">May</div><div class="t" style="left:244px;top:565.7px;font-size:12px;color:#000;">Jun</div><div class="t" style="left:288px;top:565.7px;font-size:12px;color:#000;">Jul</div><div class="t" style="left:336px;top:565.7px;font-size:12px;color:#000;">Ago</div><div class="t" style="left:380px;top:565.7px;font-size:12px;color:#000;">Sep</div><div class="t" style="left:426px;top:565.7px;font-size:12px;color:#000;">Oct</div><div class="t" style="left:474px;top:565.7px;font-size:12px;color:#000;">Nov</div><div class="t" style="left:516px;top:565.7px;font-size:12px;color:#000;">Dic</div><div class="t" style="left:560px;top:565.7px;font-size:12px;color:#000;">2015</div><div class="t" style="left:604px;top:565.7px;font-size:12px;color:#000;">Feb</div><div class="t" style="left:645px;top:565.7px;font-size:12px;color:#000;">Mar</div><div class="t" style="left:691px;top:565.7px;font-size:12px;color:#000;">Abr</div><div class="t" style="left:733px;top:565.7px;font-size:12px;color:#000;">May</div><div class="t" style="left:775px;top:565.7px;font-size:12px;color:#000;">Jun</div><div class="t" style="left:821px;top:565.7px;font-size:12px;color:#000;">Jul</div><div class="t" style="left:869px;top:565.7px;font-size:12px;color:#000;">Ago</div><div class="t" style="left:913px;top:565.7px;font-size:12px;color:#000;">Sep</div><div class="t" style="left:959px;top:565.7px;font-size:12px;color:#000;">Oct</div><div class="t" style="left:1005px;top:565.7px;font-size:12px;color:#000;">Nov</div><div class="t" style="left:1049px;top:565.7px;font-size:12px;color:#000;">Dic</div><div class="t" style="left:1095px;top:565.7px;font-size:12px;color:#000;">2016</div><div class="t" style="left:1137px;top:565.7px;font-size:12px;color:#000;">Feb</div><div class="t" style="left:1181px;top:565.7px;font-size:12px;color:#000;">Mar</div><div class="t" style="left:1225px;top:565.7px;font-size:12px;color:#000;">Abr</div>
</body></html>
